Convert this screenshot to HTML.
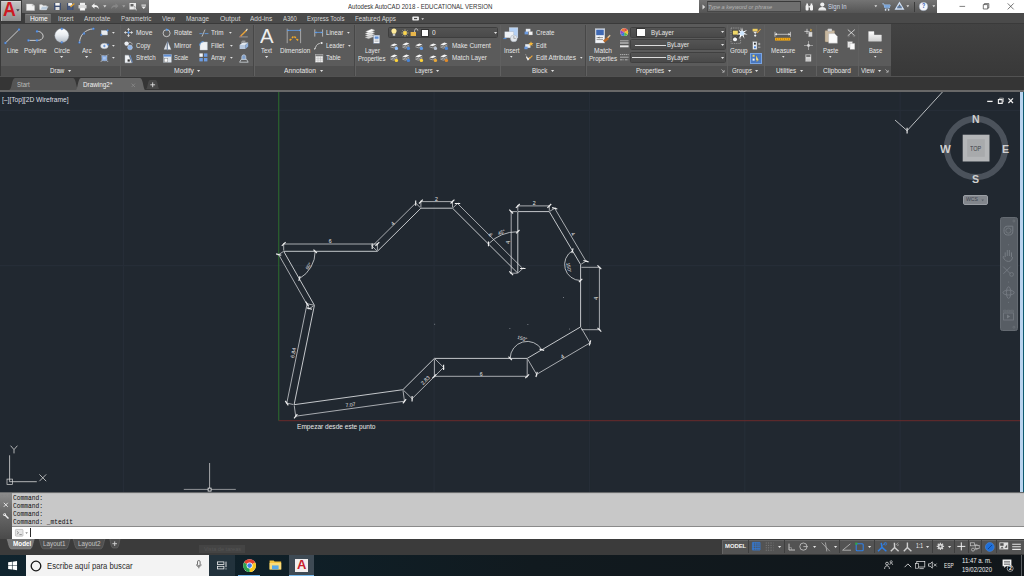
<!DOCTYPE html>
<html lang="en"><head><meta charset="utf-8"><title>Autodesk AutoCAD 2018 - EDUCATIONAL VERSION</title>
<style>
html,body{margin:0;padding:0;background:#212830;}
body{width:1024px;height:576px;overflow:hidden;position:relative;font-family:"Liberation Sans",sans-serif;}
.b{position:absolute;box-sizing:border-box;display:block;}
.t{position:absolute;white-space:pre;line-height:1;display:block;transform-origin:0 50%;}
.sec{position:absolute;left:0;overflow:hidden;width:1024px;}
svg{overflow:visible;}

#titlebar{background:#ffffff;}
#menubar{background:#4a4a4a;}
#ribbon{background:linear-gradient(#434343,#383838);}
#doctabs{background:#353535;}
#canvas{background:#212830;}
#cmd{background:#c8c8c8;}
#layoutbar{background:#3b3b3b;}
#taskbar{background:linear-gradient(90deg,#10242e 0,#0f1f27 30%,#111a1f 52%,#11161a 100%);}
#overlay{background:none;overflow:visible;}
</style></head><body>
<div class="sec" id="titlebar" style="top:0px;height:13px">
<div class="b " style="left:0.00px;top:0.00px;width:148.60px;height:13.00px;background:linear-gradient(#7e7e7e,#606060);"></div>
<svg class="b" style="left:26.30px;top:2.00px" width="9.2" height="9" viewBox="0 0 9.2 9"><path d="M.4 2h5.800l2.400 1.800v4.600H.4z" fill="#f4f4f4" stroke="#c4c4c4" stroke-width=".4"/><path d="M6.200 2v1.800h2.400" fill="#d8d8d8" stroke="#9a9a9a" stroke-width=".3"/></svg>
<svg class="b" style="left:39.00px;top:2.00px" width="10" height="9" viewBox="0 0 10 9"><path d="M.5 2.600h2.600l.9.900h3.600v4.300H.5z" fill="#ececec"/><path d="M1.300 7.800l1.700-3.200h6.200L7.400 7.800z" fill="#b9cadb" stroke="#f0f0f0" stroke-width=".3"/></svg>
<svg class="b" style="left:53.00px;top:2.00px" width="8" height="9" viewBox="0 0 8 9"><rect x="1" y="1" width="7" height="7" fill="#3f4f72"/><rect x="2.3" y="1" width="4.4" height="2.6" fill="#f4f4f4"/><rect x="2.5" y="5" width="4" height="3" fill="#e0e0e0"/></svg>
<svg class="b" style="left:65.50px;top:2.00px" width="9" height="9" viewBox="0 0 9 9"><rect x="1" y="1" width="6.500" height="7" fill="#3f4f72"/><rect x="2.200" y="1" width="4" height="2.800" fill="#f0f0f0"/><rect x="2" y="4.6" width="4.4" height="3.4" fill="#46587e"/><path d="M4 4.500l3.800-3.600 1 1L5 5.600z" fill="#e0a030"/></svg>
<svg class="b" style="left:78.00px;top:2.00px" width="9" height="9" viewBox="0 0 9 9"><rect x="2" y=".8" width="5" height="2.6" fill="#f0f0f0"/><rect x=".5" y="3" width="8" height="3.6" rx=".6" fill="#dcdcdc"/><rect x="2" y="5.4" width="5" height="3" fill="#fafafa" stroke="#bbb" stroke-width=".3"/></svg>
<svg class="b" style="left:91.40px;top:2.00px" width="8" height="9" viewBox="0 0 8 9"><path d="M.5 4l3-2.8v1.9c3 0 4.3 1.5 4.3 4.2C7 5.5 6 4.9 3.5 4.9v1.9z" fill="#f0f0f0"/></svg>
<svg class="b" style="left:102.80px;top:5.00px" width="4" height="3" viewBox="0 0 4 3"><path d="M.2.3h3.2L1.8 2.4z" fill="#d8d8d8"/></svg>
<svg class="b" style="left:110.50px;top:2.00px" width="8" height="9" viewBox="0 0 8 9"><path d="M7.5 4l-3-2.8v1.9c-3 0-4.3 1.5-4.3 4.2C1 5.5 2 4.9 4.5 4.9v1.9z" fill="#868686"/></svg>
<svg class="b" style="left:121.80px;top:5.00px" width="4" height="3" viewBox="0 0 4 3"><path d="M.2.3h3.2L1.8 2.4z" fill="#a0a0a0"/></svg>
<svg class="b" style="left:129.40px;top:2.00px" width="9" height="9" viewBox="0 0 9 9"><rect x=".5" y="1" width="6.5" height="6.5" fill="#ececec"/><rect x="1.5" y="2" width="3" height="2.5" fill="#666"/><path d="M5.5 4l2.5 4.2-1 .3-.8-1.5-1 1z" fill="#fafafa" stroke="#555" stroke-width=".3"/></svg>
<svg class="b" style="left:141.20px;top:3.60px" width="6" height="6" viewBox="0 0 6 6"><rect x=".4" y=".6" width="4.6" height="1" fill="#f0f0f0"/><path d="M.4 2.6h4.6L2.7 5z" fill="#f0f0f0"/></svg>
<span class="t" style="left:348.00px;top:3.53px;font-size:6.9px;transform:scaleX(0.8824);color:#333333;">Autodesk AutoCAD 2018 - EDUCATIONAL VERSION</span>
<div class="b " style="left:699.10px;top:0.00px;width:237.60px;height:13.00px;background:linear-gradient(#747474,#545454);"></div>
<svg class="b" style="left:701.50px;top:3.50px" width="4" height="6" viewBox="0 0 4 6"><path d="M.5.6L3.2 3 .5 5.4z" fill="#dcdcdc"/></svg>
<div class="b " style="left:706.60px;top:0.80px;width:94.80px;height:11.20px;background:#6f6f6f;border:0.6px solid #484848;border-top-color:#3a3a3a;"></div>
<span class="t" style="left:708.20px;top:3.57px;font-size:6.2px;transform:scaleX(0.9018);color:#b4b4b4;font-style:italic;">Type a keyword or phrase</span>
<svg class="b" style="left:804.50px;top:2.50px" width="9" height="8" viewBox="0 0 9 8"><rect x=".6" y="2" width="3" height="5.4" rx="1" fill="#f2f2f2"/><rect x="5" y="2" width="3" height="5.4" rx="1" fill="#f2f2f2"/><rect x="1.3" y=".5" width="1.7" height="2" fill="#f2f2f2"/><rect x="5.6" y=".5" width="1.7" height="2" fill="#f2f2f2"/><rect x="3.4" y="3" width="1.8" height="1.6" fill="#e0e0e0"/></svg>
<svg class="b" style="left:817.50px;top:2.20px" width="9" height="9" viewBox="0 0 9 9"><circle cx="4.3" cy="2.6" r="2.1" fill="#f0f0f0"/><path d="M.4 8.2c0-2.4 1.7-3.3 3.9-3.3s3.9.9 3.9 3.3z" fill="#f0f0f0"/><rect x=".4" y="7.6" width="7.8" height=".8" fill="#cfcfcf"/></svg>
<span class="t" style="left:828.40px;top:3.58px;font-size:6.6px;transform:scaleX(0.9059);color:#cfd8e4;">Sign In</span>
<svg class="b" style="left:873.50px;top:5.40px" width="4" height="3" viewBox="0 0 4 3"><path d="M.4.3h2.8L1.8 2.2z" fill="#e0e0e0"/></svg>
<svg class="b" style="left:882.00px;top:2.60px" width="9" height="8" viewBox="0 0 9 8"><path d="M.3.8h1.5l1.2 4.2h4.2l1-3H2.4" fill="none" stroke="#9cc0ea" stroke-width="1"/><rect x="2.6" y="2" width="5" height="2.6" fill="#7aa6dc"/><circle cx="3.6" cy="6.8" r=".9" fill="#dfe9f6"/><circle cx="6.6" cy="6.8" r=".9" fill="#dfe9f6"/></svg>
<svg class="b" style="left:895.00px;top:2.30px" width="9" height="8" viewBox="0 0 9 8"><path d="M4.5.8L8.3 7H.7z" fill="none" stroke="#cfe0f6" stroke-width="1.3"/><path d="M2.3 5h4.4" stroke="#5f8fd0" stroke-width="1"/></svg>
<svg class="b" style="left:906.00px;top:5.40px" width="4" height="3" viewBox="0 0 4 3"><path d="M.4.3h2.8L1.8 2.2z" fill="#e0e0e0"/></svg>
<div class="b " style="left:914.40px;top:1.50px;width:0.70px;height:10.00px;background:#3c3c3c;"></div>
<svg class="b" style="left:919.40px;top:2.00px" width="9" height="9" viewBox="0 0 9 9"><circle cx="4.5" cy="4.5" r="4.1" fill="#f4f6fa" stroke="#b9c6da" stroke-width=".5"/></svg>
<span class="t" style="left:922.30px;top:3.47px;font-size:6.4px;transform:scaleX(0.8448);color:#2b55b5;font-weight:700;">?</span>
<svg class="b" style="left:931.70px;top:5.40px" width="4" height="3" viewBox="0 0 4 3"><path d="M.4.3h2.8L1.8 2.2z" fill="#e0e0e0"/></svg>
<svg class="b" style="left:958.00px;top:1.00px" width="60" height="11" viewBox="0 0 60 11"><path d="M1.5 5.4h5.6" stroke="#4a4a4a" stroke-width=".7"/><path d="M25.3 3.6h4.4v4.4h-4.4z M26.4 3.6v-1h4.4v4.4h-1" fill="none" stroke="#3c3c3c" stroke-width=".7"/><path d="M49.7 2.4l6 6M55.7 2.4l-6 6" stroke="#3c3c3c" stroke-width=".7"/></svg>
</div>
<div class="sec" id="menubar" style="top:13px;height:10px">
<div class="b " style="left:0.00px;top:0.00px;width:25.00px;height:10.50px;background:#3c3c3c;"></div>
<div class="b " style="left:24.80px;top:1.20px;width:26.60px;height:9.60px;background:linear-gradient(#6e6e6e,#646464);border-top:0.5px solid #808080;border-radius:1px 1px 0 0;"></div>
<span class="t" style="left:29.60px;top:3.37px;font-size:6.4px;transform:scaleX(1.0432);color:#ffffff;">Home</span>
<span class="t" style="left:58.00px;top:3.37px;font-size:6.4px;transform:scaleX(0.9634);color:#d6d6d6;">Insert</span>
<span class="t" style="left:83.60px;top:3.37px;font-size:6.4px;transform:scaleX(1.0315);color:#d6d6d6;">Annotate</span>
<span class="t" style="left:120.60px;top:3.37px;font-size:6.4px;transform:scaleX(0.9836);color:#d6d6d6;">Parametric</span>
<span class="t" style="left:162.00px;top:3.37px;font-size:6.4px;transform:scaleX(0.9455);color:#d6d6d6;">View</span>
<span class="t" style="left:185.60px;top:3.37px;font-size:6.4px;transform:scaleX(0.9953);color:#d6d6d6;">Manage</span>
<span class="t" style="left:219.60px;top:3.37px;font-size:6.4px;transform:scaleX(1.0632);color:#d6d6d6;">Output</span>
<span class="t" style="left:250.20px;top:3.37px;font-size:6.4px;transform:scaleX(1.0244);color:#d6d6d6;">Add-ins</span>
<span class="t" style="left:283.20px;top:3.37px;font-size:6.4px;transform:scaleX(0.9238);color:#d6d6d6;">A360</span>
<span class="t" style="left:307.20px;top:3.37px;font-size:6.4px;transform:scaleX(0.9427);color:#d6d6d6;">Express Tools</span>
<span class="t" style="left:355.20px;top:3.37px;font-size:6.4px;transform:scaleX(0.9861);color:#d6d6d6;">Featured Apps</span>
<svg class="b" style="left:412.30px;top:2.80px" width="8" height="6" viewBox="0 0 8 6"><rect x=".3" y=".6" width="6.6" height="4" rx=".8" fill="#f0f0f0"/><rect x="2" y="1.9" width="3.2" height="1.3" fill="#4a4a4a"/></svg>
<svg class="b" style="left:421.30px;top:4.70px" width="4" height="3" viewBox="0 0 4 3"><path d="M.4.3h2.6L1.7 2z" fill="#e0e0e0"/></svg>
</div>
<div class="sec" id="ribbon" style="top:23px;height:53px">
<div class="b " style="left:0.00px;top:0.00px;width:1024.00px;height:0.60px;background:#3a3a3a;"></div>
<div class="b " style="left:0.00px;top:0.50px;width:891.00px;height:42.20px;background:#5b5b5b;"></div>
<div class="b " style="left:0.00px;top:42.70px;width:891.00px;height:10.80px;background:#4f4f4f;"></div>
<div class="b " style="left:0.00px;top:52.80px;width:1024.00px;height:0.80px;background:#383838;"></div>
<div class="b " style="left:0.00px;top:0.50px;width:0.90px;height:53.00px;background:#3a3a3a;"></div>
<div class="b " style="left:119.50px;top:1.50px;width:0.60px;height:51.00px;background:#474747;"></div>
<div class="b " style="left:120.10px;top:1.50px;width:0.50px;height:51.00px;background:#606060;"></div>
<div class="b " style="left:253.00px;top:1.50px;width:0.60px;height:51.00px;background:#474747;"></div>
<div class="b " style="left:253.60px;top:1.50px;width:0.50px;height:51.00px;background:#606060;"></div>
<div class="b " style="left:353.90px;top:1.50px;width:0.60px;height:51.00px;background:#474747;"></div>
<div class="b " style="left:354.50px;top:1.50px;width:0.50px;height:51.00px;background:#606060;"></div>
<div class="b " style="left:499.50px;top:1.50px;width:0.60px;height:51.00px;background:#474747;"></div>
<div class="b " style="left:500.10px;top:1.50px;width:0.50px;height:51.00px;background:#606060;"></div>
<div class="b " style="left:585.10px;top:1.50px;width:0.60px;height:51.00px;background:#474747;"></div>
<div class="b " style="left:585.70px;top:1.50px;width:0.50px;height:51.00px;background:#606060;"></div>
<div class="b " style="left:726.70px;top:1.50px;width:0.60px;height:51.00px;background:#474747;"></div>
<div class="b " style="left:727.30px;top:1.50px;width:0.50px;height:51.00px;background:#606060;"></div>
<div class="b " style="left:763.50px;top:1.50px;width:0.60px;height:51.00px;background:#474747;"></div>
<div class="b " style="left:764.10px;top:1.50px;width:0.50px;height:51.00px;background:#606060;"></div>
<div class="b " style="left:815.50px;top:1.50px;width:0.60px;height:51.00px;background:#474747;"></div>
<div class="b " style="left:816.10px;top:1.50px;width:0.50px;height:51.00px;background:#606060;"></div>
<div class="b " style="left:857.50px;top:1.50px;width:0.60px;height:51.00px;background:#474747;"></div>
<div class="b " style="left:858.10px;top:1.50px;width:0.50px;height:51.00px;background:#606060;"></div>
<svg class="b" style="left:3.00px;top:4.50px" width="18" height="18" viewBox="0 0 18 18"><path d="M2.4 15L16 1.6" stroke="#e8e8e8" stroke-width=".8"/><circle cx="2.4" cy="15" r="1.04" fill="#6fa4e8" stroke="#2f68c0" stroke-width=".45"/><circle cx="16" cy="1.6" r="1.04" fill="#6fa4e8" stroke="#2f68c0" stroke-width=".45"/></svg>
<span class="t" style="left:6.60px;top:24.67px;font-size:6.4px;transform:scaleX(0.9426);color:#e6e6e6;">Line</span>
<svg class="b" style="left:26.00px;top:5.00px" width="20" height="16" viewBox="0 0 20 16"><path d="M2.4 12.4H11.5C20 12.4 18 3 11 3.4" fill="none" stroke="#e8e8e8" stroke-width=".8"/><circle cx="2.4" cy="12.4" r="1.04" fill="#6fa4e8" stroke="#2f68c0" stroke-width=".45"/><circle cx="11" cy="12.4" r="1.04" fill="#6fa4e8" stroke="#2f68c0" stroke-width=".45"/><circle cx="11" cy="3.4" r="1.04" fill="#6fa4e8" stroke="#2f68c0" stroke-width=".45"/></svg>
<span class="t" style="left:24.00px;top:24.67px;font-size:6.4px;transform:scaleX(1.0094);color:#e6e6e6;">Polyline</span>
<svg class="b" style="left:54.00px;top:5.00px" width="16" height="16" viewBox="0 0 16 16"><defs><linearGradient id="cg" x1="0" y1="0" x2="0" y2="1"><stop offset="0" stop-color="#ffffff"/><stop offset=".45" stop-color="#e9edf1"/><stop offset="1" stop-color="#b4bcc6"/></linearGradient></defs><circle cx="7.8" cy="7.6" r="7" fill="url(#cg)" stroke="#9aa4b0" stroke-width=".4"/><circle cx="7.8" cy="0.8" r="0.94" fill="#6fa4e8" stroke="#2f68c0" stroke-width=".45"/><circle cx="7.8" cy="14.4" r="0.94" fill="#6fa4e8" stroke="#2f68c0" stroke-width=".45"/></svg>
<span class="t" style="left:54.00px;top:24.67px;font-size:6.4px;transform:scaleX(0.9790);color:#e6e6e6;">Circle</span>
<svg class="b" style="left:60.10px;top:32.90px" width="3.2" height="2" viewBox="0 0 3.2 2"><path d="M0 0h3.2L1.6 2z" fill="#e0e0e0"/></svg>
<svg class="b" style="left:77.00px;top:4.00px" width="19" height="18" viewBox="0 0 19 18"><path d="M2.5 15.5C3 8 8 2.6 16.4 1.8" fill="none" stroke="#e8e8e8" stroke-width=".8"/><circle cx="2.5" cy="15.5" r="1.04" fill="#6fa4e8" stroke="#2f68c0" stroke-width=".45"/><circle cx="7" cy="6.6" r="1.04" fill="#6fa4e8" stroke="#2f68c0" stroke-width=".45"/><circle cx="16.4" cy="1.8" r="1.04" fill="#6fa4e8" stroke="#2f68c0" stroke-width=".45"/></svg>
<span class="t" style="left:81.70px;top:24.67px;font-size:6.4px;transform:scaleX(1.0111);color:#e6e6e6;">Arc</span>
<svg class="b" style="left:84.70px;top:32.90px" width="3.2" height="2" viewBox="0 0 3.2 2"><path d="M0 0h3.2L1.6 2z" fill="#e0e0e0"/></svg>
<svg class="b" style="left:100.00px;top:5.60px" width="9" height="8" viewBox="0 0 9 8"><rect x="1.2" y="1.4" width="6.4" height="4.6" fill="#e9edf2" stroke="#aab4c0" stroke-width=".4"/><circle cx="1.2" cy="6" r="0.83" fill="#6fa4e8" stroke="#2f68c0" stroke-width=".45"/><circle cx="7.6" cy="1.4" r="0.83" fill="#6fa4e8" stroke="#2f68c0" stroke-width=".45"/></svg>
<svg class="b" style="left:100.00px;top:18.50px" width="9" height="8" viewBox="0 0 9 8"><ellipse cx="4.4" cy="4" rx="3.8" ry="2.7" fill="#e9edf2" stroke="#aab4c0" stroke-width=".4"/><circle cx="4.4" cy="4" r="0.83" fill="#6fa4e8" stroke="#2f68c0" stroke-width=".45"/><circle cx="8" cy="2.6" r="0.73" fill="#6fa4e8" stroke="#2f68c0" stroke-width=".45"/></svg>
<svg class="b" style="left:100.00px;top:31.00px" width="9" height="9" viewBox="0 0 9 9"><rect x="1.800" y="1.600" width="5.200" height="5.200" fill="#7fa6e0" stroke="#d4deee" stroke-width=".5" stroke-dasharray=".9 .5"/><rect x="3" y="2.800" width="2.800" height="2.800" fill="#a9c4ec"/><path d="M.6.400l1.200 1.200M8.200.400L7 1.600M.6 8L1.800 6.800M8.200 8L7 6.800" stroke="#cfd8e6" stroke-width=".6"/></svg>
<svg class="b" style="left:111.90px;top:8.80px" width="2.8" height="1.8" viewBox="0 0 2.8 1.8"><path d="M0 0h2.8L1.4 1.8z" fill="#e0e0e0"/></svg>
<svg class="b" style="left:111.90px;top:22.20px" width="2.8" height="1.8" viewBox="0 0 2.8 1.8"><path d="M0 0h2.8L1.4 1.8z" fill="#e0e0e0"/></svg>
<svg class="b" style="left:111.90px;top:34.40px" width="2.8" height="1.8" viewBox="0 0 2.8 1.8"><path d="M0 0h2.8L1.4 1.8z" fill="#e0e0e0"/></svg>
<span class="t" style="left:49.70px;top:44.57px;font-size:6.4px;transform:scaleX(0.9583);color:#e6e6e6;">Draw</span>
<svg class="b" style="left:67.90px;top:46.90px" width="3.2" height="2" viewBox="0 0 3.2 2"><path d="M0 0h3.2L1.6 2z" fill="#e0e0e0"/></svg>
<svg class="b" style="left:123.80px;top:5.30px" width="9" height="9" viewBox="0 0 9 9"><path d="M4.5 0L6 1.8H3zM4.5 9L6 7.2H3zM0 4.5L1.8 3v3zM9 4.5L7.2 3v3z" fill="#f0f0f0"/><path d="M4.5 1.5v6M1.5 4.5h6" stroke="#f0f0f0" stroke-width=".7"/><rect x="3.5" y="3.5" width="2" height="2" fill="#4f8fe0" transform="rotate(45 4.5 4.5)"/></svg>
<span class="t" style="left:135.60px;top:6.57px;font-size:6.4px;transform:scaleX(1.0486);color:#e6e6e6;">Move</span>
<svg class="b" style="left:123.80px;top:18.00px" width="10" height="10" viewBox="0 0 10 10"><circle cx="2.6" cy="2.6" r="2.2" fill="#eceff3"/><circle cx="6" cy="6.4" r="2.4" fill="#8fb3e6" stroke="#dfe8f4" stroke-width=".4"/><path d="M5 1.2c2 0 3 .8 3.2 2.4" fill="none" stroke="#e8e8e8" stroke-width=".6"/></svg>
<span class="t" style="left:135.60px;top:20.27px;font-size:6.4px;transform:scaleX(0.9650);color:#e6e6e6;">Copy</span>
<svg class="b" style="left:124.00px;top:30.50px" width="9" height="10" viewBox="0 0 9 10"><path d="M1 8.8V1.2h3.6L7.6 8.8z" fill="#f2f4f7" stroke="#bcc5d0" stroke-width=".4"/><rect x="3.6" y="5.4" width="2.2" height="2.2" fill="#333"/><path d="M6 1l2.4 7.6" stroke="#6c9be0" stroke-width=".8"/></svg>
<span class="t" style="left:135.60px;top:32.17px;font-size:6.4px;transform:scaleX(0.9679);color:#e6e6e6;">Stretch</span>
<svg class="b" style="left:162.30px;top:5.00px" width="10" height="10" viewBox="0 0 10 10"><circle cx="4.6" cy="5.2" r="3.5" fill="none" stroke="#dcdcdc" stroke-width=".8"/><path d="M3.8.4l3 .9-2.2 2z" fill="#5fa0ee"/></svg>
<span class="t" style="left:174.00px;top:6.57px;font-size:6.4px;transform:scaleX(0.9658);color:#e6e6e6;">Rotate</span>
<svg class="b" style="left:162.60px;top:17.60px" width="9" height="10" viewBox="0 0 9 10"><path d="M3.8 1.2V8.6H.8z" fill="#d8dde4"/><path d="M5 1.2V8.6H8z" fill="#f4f6f9" stroke="#aeb8c4" stroke-width=".3"/><path d="M4.4.4v9" stroke="#8fb3e6" stroke-width=".5"/></svg>
<span class="t" style="left:174.00px;top:19.97px;font-size:6.4px;transform:scaleX(1.0547);color:#e6e6e6;">Mirror</span>
<svg class="b" style="left:162.60px;top:30.60px" width="9" height="9" viewBox="0 0 9 9"><rect x=".6" y=".6" width="7.8" height="7.8" fill="#dfe4ea" stroke="#a9b3bf" stroke-width=".4"/><rect x=".6" y=".6" width="7.8" height="2" fill="#5f8fd6"/><rect x="1.4" y="4.6" width="3.4" height="3.4" fill="#fafafa" stroke="#777" stroke-width=".4"/></svg>
<span class="t" style="left:174.00px;top:32.17px;font-size:6.4px;transform:scaleX(0.8938);color:#e6e6e6;">Scale</span>
<svg class="b" style="left:199.20px;top:5.60px" width="10" height="8" viewBox="0 0 10 8"><path d="M.4 4.6h3.2M5.6 4.6h3.8" stroke="#5fa0ee" stroke-width=".8"/><path d="M3 7.6L6 .6" stroke="#dcdcdc" stroke-width=".7"/></svg>
<span class="t" style="left:211.00px;top:6.57px;font-size:6.4px;transform:scaleX(0.9883);color:#e6e6e6;">Trim</span>
<svg class="b" style="left:229.20px;top:8.80px" width="2.8" height="1.8" viewBox="0 0 2.8 1.8"><path d="M0 0h2.8L1.4 1.8z" fill="#e0e0e0"/></svg>
<svg class="b" style="left:199.40px;top:17.80px" width="9" height="10" viewBox="0 0 9 10"><path d="M1 9V4.4C1 2.4 2.4 1 4.4 1H8.4V9z" fill="#eef1f5" stroke="#b5bfcb" stroke-width=".4"/><path d="M.6 4.6C.6 2.2 2.2.6 4.6.6" fill="none" stroke="#5fa0ee" stroke-width=".9"/></svg>
<span class="t" style="left:211.00px;top:19.97px;font-size:6.4px;transform:scaleX(0.9630);color:#e6e6e6;">Fillet</span>
<svg class="b" style="left:229.60px;top:22.20px" width="2.8" height="1.8" viewBox="0 0 2.8 1.8"><path d="M0 0h2.8L1.4 1.8z" fill="#e0e0e0"/></svg>
<svg class="b" style="left:199.40px;top:30.40px" width="9" height="9" viewBox="0 0 9 9"><rect x=".4" y=".4" width="3.4" height="3.4" fill="#f2f4f7"/><rect x="5" y=".4" width="3.4" height="3.4" fill="#6c9be0"/><rect x=".4" y="5" width="3.4" height="3.4" fill="#6c9be0"/><rect x="5" y="5" width="3.4" height="3.4" fill="#6c9be0"/></svg>
<span class="t" style="left:211.00px;top:32.17px;font-size:6.4px;transform:scaleX(0.9489);color:#e6e6e6;">Array</span>
<svg class="b" style="left:229.60px;top:34.40px" width="2.8" height="1.8" viewBox="0 0 2.8 1.8"><path d="M0 0h2.8L1.4 1.8z" fill="#e0e0e0"/></svg>
<svg class="b" style="left:239.40px;top:5.00px" width="9" height="9" viewBox="0 0 9 9"><path d="M1 7.8L6.6 2.2l1 1L2 8.8z" fill="#e8a33a"/><path d="M6.4 2.4L8 .6l.8.8L7.4 3.2z" fill="#f3e6c8"/><path d="M.4 8.8l.8-1.4 1 1z" fill="#c0392b"/><path d="M.2 8.9h8.6" stroke="#d0d0d0" stroke-width=".5"/></svg>
<svg class="b" style="left:239.20px;top:18.00px" width="10" height="9" viewBox="0 0 10 9"><path d="M.6 4l3-2.4h5.6L6.4 4z" fill="#dfe6ee"/><rect x=".6" y="4" width="5.8" height="4" fill="#b9c9de"/><path d="M6.4 4l2.8-2.4v4L6.4 8z" fill="#8fb0da"/><path d="M2.2 1.4L3.6.2h2.8" stroke="#f4f4f4" stroke-width=".6" fill="none"/></svg>
<svg class="b" style="left:239.20px;top:30.60px" width="10" height="9" viewBox="0 0 10 9"><path d="M2.8 5.4V3.2C2.8 1.6 3.6.8 4.8.8S6.8 1.6 6.8 3.2v2.2" fill="#7f9fca" stroke="#dfe6ee" stroke-width=".6"/><path d="M.6 8.2l1.6-2.8h5.4l1.6 2.8z" fill="none" stroke="#dfe6ee" stroke-width=".7"/></svg>
<span class="t" style="left:173.60px;top:44.57px;font-size:6.4px;transform:scaleX(1.0622);color:#e6e6e6;">Modify</span>
<svg class="b" style="left:197.40px;top:46.90px" width="3.2" height="2" viewBox="0 0 3.2 2"><path d="M0 0h3.2L1.6 2z" fill="#e0e0e0"/></svg>
<span class="t" style="left:260.00px;top:3.53px;font-size:19.6px;transform:scaleX(1.0399);color:#eeeeee;">A</span>
<span class="t" style="left:261.00px;top:24.67px;font-size:6.4px;transform:scaleX(0.9374);color:#e6e6e6;">Text</span>
<svg class="b" style="left:264.80px;top:32.90px" width="3.2" height="2" viewBox="0 0 3.2 2"><path d="M0 0h3.2L1.6 2z" fill="#e0e0e0"/></svg>
<svg class="b" style="left:286.00px;top:4.60px" width="16" height="16" viewBox="0 0 16 16"><path d="M1.2.6v14.6M14.6.6v14.6" stroke="#dcdcdc" stroke-width=".6"/><path d="M1.2 2.4h13.4" stroke="#5fa0ee" stroke-width=".8"/><path d="M1.2 2.4l1.6-.9v1.8zM14.6 2.4l-1.6-.9v1.8z" fill="#5fa0ee"/><path d="M3.6 12.4l1.8-1.4M6 10l1.4-1.6M8.4 8.4L9.8 10M10.4 11l1.8 1.4" stroke="#f0a828" stroke-width="1.5"/></svg>
<span class="t" style="left:279.70px;top:24.67px;font-size:6.4px;transform:scaleX(1.0032);color:#e6e6e6;">Dimension</span>
<svg class="b" style="left:314.00px;top:5.60px" width="10" height="8" viewBox="0 0 10 8"><path d="M.8.4v7.2M8.6.4v7.2" stroke="#dcdcdc" stroke-width=".7"/><path d="M.8 3.4h7.8" stroke="#5fa0ee" stroke-width=".8"/><path d="M.8 3.4l1.8-1v2zM8.6 3.4l-1.8-1v2z" fill="#5fa0ee"/></svg>
<span class="t" style="left:325.50px;top:6.57px;font-size:6.4px;transform:scaleX(0.9682);color:#e6e6e6;">Linear</span>
<svg class="b" style="left:346.60px;top:8.80px" width="2.8" height="1.8" viewBox="0 0 2.8 1.8"><path d="M0 0h2.8L1.4 1.8z" fill="#e0e0e0"/></svg>
<svg class="b" style="left:314.00px;top:18.00px" width="10" height="9" viewBox="0 0 10 9"><path d="M.8 8.2C2 5.4 2.4 3 5.8 2.4" fill="none" stroke="#dcdcdc" stroke-width=".8"/><circle cx="7.6" cy="2" r="1.1" fill="#f0f0f0"/><path d="M.2 8.8l.2-2 1.4 1z" fill="#dcdcdc"/></svg>
<span class="t" style="left:325.50px;top:19.97px;font-size:6.4px;transform:scaleX(0.9294);color:#e6e6e6;">Leader</span>
<svg class="b" style="left:348.20px;top:22.20px" width="2.8" height="1.8" viewBox="0 0 2.8 1.8"><path d="M0 0h2.8L1.4 1.8z" fill="#e0e0e0"/></svg>
<svg class="b" style="left:314.60px;top:30.60px" width="9" height="9" viewBox="0 0 9 9"><rect x=".5" y=".5" width="7.4" height="7.6" fill="#f4f4f4" stroke="#cfcfcf" stroke-width=".4"/><rect x=".5" y=".5" width="7.4" height="1.8" fill="#7a7a7a"/><path d="M3 2.3v5.8M5.4 2.3v5.8M.5 4.3h7.4M.5 6.2h7.4" stroke="#9a9a9a" stroke-width=".4"/></svg>
<span class="t" style="left:325.50px;top:32.17px;font-size:6.4px;transform:scaleX(0.9620);color:#e6e6e6;">Table</span>
<span class="t" style="left:284.40px;top:44.57px;font-size:6.4px;transform:scaleX(1.0470);color:#e6e6e6;">Annotation</span>
<svg class="b" style="left:319.90px;top:46.90px" width="3.2" height="2" viewBox="0 0 3.2 2"><path d="M0 0h3.2L1.6 2z" fill="#e0e0e0"/></svg>
<svg class="b" style="left:363.50px;top:4.60px" width="17" height="16" viewBox="0 0 17 16"><path d="M1 5.6L7.2 3l3.6 1.2-6.2 2.6z" fill="#fafafa" stroke="#9a9a9a" stroke-width=".3"/><path d="M1 7.6l6.2-2.6 3.6 1.2-6.2 2.6z" fill="#e6e6e6" stroke="#9a9a9a" stroke-width=".3"/><path d="M1 9.6L7.2 7l3.6 1.2-6.2 2.6z" fill="#d6d6d6" stroke="#9a9a9a" stroke-width=".3"/><path d="M1.6 3.6L7.6 1l3.4 1.2-6 2.6z" fill="#ffffff" stroke="#9a9a9a" stroke-width=".3"/><rect x="9.6" y="7.2" width="6" height="8" fill="#f4f6f9" stroke="#8aa0c0" stroke-width=".4"/><rect x="10.6" y="8.4" width="4" height="2.4" fill="#5f8fd6"/><path d="M10.6 12h4M10.6 13.4h4" stroke="#8a8a8a" stroke-width=".5"/></svg>
<span class="t" style="left:364.50px;top:24.87px;font-size:6.4px;transform:scaleX(0.9312);color:#e6e6e6;">Layer</span>
<span class="t" style="left:357.50px;top:32.77px;font-size:6.4px;transform:scaleX(0.9437);color:#e6e6e6;">Properties</span>
<div class="b " style="left:387.80px;top:3.90px;width:110.60px;height:11.40px;background:linear-gradient(#535353,#4a4a4a);border:0.5px solid #3e3e3e;border-radius:1.5px;"></div>
<svg class="b" style="left:391.40px;top:5.40px" width="6" height="9" viewBox="0 0 6 9"><path d="M3 .4C1.4.4.4 1.6.4 3c0 1.2.9 1.8 1.2 2.8h2.8C4.700 4.800 5.600 4.200 5.600 3 5.600 1.600 4.600.4 3 .4z" fill="#ffeb9a"/><rect x="1.800" y="6" width="2.400" height="1.800" fill="#c9c9c9"/></svg>
<svg class="b" style="left:401.00px;top:5.60px" width="8" height="8" viewBox="0 0 8 8"><path d="M4 .3v7.400M.3 4h7.400M1.400 1.400l5.200 5.200M6.600 1.400L1.400 6.600" stroke="#f6e9a8" stroke-width=".5"/><circle cx="4" cy="4" r="1.900" fill="#ffd84a"/></svg>
<svg class="b" style="left:410.40px;top:5.40px" width="8" height="9" viewBox="0 0 8 9"><path d="M4.600 4V2.600C4.600 1.400 5.300.8 6.200.8S7.800 1.400 7.800 2.600" fill="none" stroke="#d8d8d8" stroke-width=".8"/><rect x=".6" y="4" width="5.400" height="4" fill="#e9b64a"/></svg>
<div class="b " style="left:421.00px;top:6.00px;width:8.00px;height:8.00px;background:#343434;"></div>
<div class="b " style="left:421.60px;top:6.60px;width:6.80px;height:6.80px;background:#ffffff;"></div>
<span class="t" style="left:431.50px;top:6.77px;font-size:6.4px;transform:scaleX(1.0386);color:#e6e6e6;">0</span>
<svg class="b" style="left:493.60px;top:8.80px" width="3.2" height="2" viewBox="0 0 3.2 2"><path d="M0 0h3.2L1.6 2z" fill="#e0e0e0"/></svg>
<svg class="b" style="left:389.90px;top:18.60px" width="9" height="9" viewBox="0 0 9 9"><path d="M.4 3.200L4.400 1.400l3 1-4 1.800z" fill="#f4f4f4"/><path d="M.4 4.800l3 1 4-1.800" fill="none" stroke="#d0d0d0" stroke-width=".6"/><circle cx="6.400" cy="6.400" r="1.700" fill="#8fc0ff"/></svg>
<svg class="b" style="left:402.00px;top:18.60px" width="9" height="9" viewBox="0 0 9 9"><path d="M.4 2.400L4.400.6l3 1-4 1.800z" fill="#f4f4f4"/><path d="M.4 3.800l3 1 4-1.800M.4 5.200l3 1 4-1.800" fill="none" stroke="#d0d0d0" stroke-width=".6"/><circle cx="6.400" cy="6.400" r="1.700" fill="#4a86d8"/></svg>
<svg class="b" style="left:415.30px;top:18.60px" width="9" height="9" viewBox="0 0 9 9"><path d="M.4 3.200L4.400 1.400l3 1-4 1.800z" fill="#f4f4f4"/><path d="M.4 4.800l3 1 4-1.800" fill="none" stroke="#d0d0d0" stroke-width=".6"/><circle cx="6.400" cy="6.400" r="1.700" fill="#5f9cea"/></svg>
<svg class="b" style="left:428.50px;top:18.60px" width="9" height="9" viewBox="0 0 9 9"><path d="M.4 3.200L4.400 1.400l3 1-4 1.800z" fill="#f4f4f4"/><path d="M.4 4.800l3 1 4-1.800" fill="none" stroke="#d0d0d0" stroke-width=".6"/><circle cx="6.400" cy="6.400" r="1.700" fill="#b8c4d4"/></svg>
<svg class="b" style="left:440.30px;top:18.60px" width="9" height="9" viewBox="0 0 9 9"><path d="M.4 2.400L4.400.6l3 1-4 1.800z" fill="#f4f4f4"/><path d="M.4 3.800l3 1 4-1.800M.4 5.200l3 1 4-1.800" fill="none" stroke="#d0d0d0" stroke-width=".6"/><circle cx="6.400" cy="6.400" r="1.700" fill="#4a86d8"/></svg>
<span class="t" style="left:452.20px;top:19.97px;font-size:6.4px;transform:scaleX(1.0021);color:#e6e6e6;">Make Current</span>
<svg class="b" style="left:389.90px;top:30.80px" width="9" height="9" viewBox="0 0 9 9"><path d="M.4 2.400L4.400.6l3 1-4 1.800z" fill="#f4f4f4"/><path d="M.4 3.800l3 1 4-1.800M.4 5.200l3 1 4-1.800" fill="none" stroke="#d0d0d0" stroke-width=".6"/><circle cx="6.400" cy="6.400" r="1.700" fill="#ffd43a"/></svg>
<svg class="b" style="left:402.00px;top:30.80px" width="9" height="9" viewBox="0 0 9 9"><path d="M.4 2.400L4.400.6l3 1-4 1.800z" fill="#f4f4f4"/><path d="M.4 3.800l3 1 4-1.800M.4 5.200l3 1 4-1.800" fill="none" stroke="#d0d0d0" stroke-width=".6"/><circle cx="6.400" cy="6.400" r="1.700" fill="#4a86d8"/></svg>
<svg class="b" style="left:415.30px;top:30.80px" width="9" height="9" viewBox="0 0 9 9"><path d="M.4 2.400L4.400.6l3 1-4 1.800z" fill="#f4f4f4"/><path d="M.4 3.800l3 1 4-1.800M.4 5.200l3 1 4-1.800" fill="none" stroke="#d0d0d0" stroke-width=".6"/><circle cx="6.400" cy="6.400" r="1.700" fill="#ffd43a"/></svg>
<svg class="b" style="left:428.50px;top:30.80px" width="9" height="9" viewBox="0 0 9 9"><path d="M.4 3.200L4.400 1.400l3 1-4 1.800z" fill="#f4f4f4"/><path d="M.4 4.800l3 1 4-1.800" fill="none" stroke="#d0d0d0" stroke-width=".6"/><circle cx="6.400" cy="6.400" r="1.700" fill="#e9a93a"/></svg>
<svg class="b" style="left:440.30px;top:30.80px" width="9" height="9" viewBox="0 0 9 9"><path d="M.4 2.400L4.400.6l3 1-4 1.800z" fill="#f4f4f4"/><path d="M.4 3.800l3 1 4-1.800M.4 5.200l3 1 4-1.800" fill="none" stroke="#d0d0d0" stroke-width=".6"/><circle cx="6.400" cy="6.400" r="1.700" fill="#e08a2a"/></svg>
<span class="t" style="left:452.20px;top:32.17px;font-size:6.4px;transform:scaleX(0.9894);color:#e6e6e6;">Match Layer</span>
<span class="t" style="left:414.70px;top:44.57px;font-size:6.4px;transform:scaleX(0.9173);color:#e6e6e6;">Layers</span>
<svg class="b" style="left:436.20px;top:46.90px" width="3.2" height="2" viewBox="0 0 3.2 2"><path d="M0 0h3.2L1.6 2z" fill="#e0e0e0"/></svg>
<svg class="b" style="left:503.00px;top:4.20px" width="17" height="16" viewBox="0 0 17 16"><rect x="6.400" y=".8" width="8.400" height="10" fill="#b4d0f4" stroke="#dfe9f6" stroke-width=".5"/><rect x="1.800" y="4.800" width="9" height="6" fill="#eef1f5" stroke="#aab4c0" stroke-width=".4"/><circle cx="10.800" cy="11.400" r="3.400" fill="#e2e6eb" stroke="#9aa4b0" stroke-width=".4"/><path d="M10.800 9v2.400h2" stroke="#777" stroke-width=".5" fill="none"/><path d="M.4 11.600h3" stroke="#4f8fe0" stroke-width="1"/></svg>
<span class="t" style="left:503.80px;top:24.97px;font-size:6.4px;transform:scaleX(0.9760);color:#e6e6e6;">Insert</span>
<svg class="b" style="left:510.30px;top:32.75px" width="2.6" height="1.7" viewBox="0 0 2.6 1.7"><path d="M0 0h2.6L1.3 1.7z" fill="#e0e0e0"/></svg>
<svg class="b" style="left:524.00px;top:5.40px" width="9" height="8" viewBox="0 0 9 8"><rect x="1.800" y=".8" width="4.600" height="3.200" fill="#e8ecf1"/><rect x=".6" y="3.600" width="3.600" height="2.800" fill="#6c9be0"/><rect x="4.800" y="3.600" width="3.800" height="3.400" fill="#f4f4f4" stroke="#9a9a9a" stroke-width=".3"/></svg>
<span class="t" style="left:535.60px;top:6.57px;font-size:6.4px;transform:scaleX(0.9590);color:#e6e6e6;">Create</span>
<svg class="b" style="left:524.00px;top:17.80px" width="10" height="9" viewBox="0 0 10 9"><rect x="1.200" y="3.200" width="5.200" height="3.600" fill="#e8ecf1"/><rect x=".4" y="5.600" width="3.200" height="2.600" fill="#6c9be0"/><path d="M7 .2l.7 1.700 1.800.1-1.400 1.200.5 1.800L7 4l-1.600 1 .5-1.800L4.500 2l1.800-.1z" fill="#f4b73a"/></svg>
<span class="t" style="left:535.60px;top:19.97px;font-size:6.4px;transform:scaleX(0.9441);color:#e6e6e6;">Edit</span>
<svg class="b" style="left:525.40px;top:31.20px" width="9" height="8" viewBox="0 0 9 8"><path d="M1.400 2.600l1.600 3 1.600-2" fill="none" stroke="#f4f4f4" stroke-width="1.200"/><path d="M3.600 4.600l3.400-3.400.8.800-3.400 3.400z" fill="#e8a33a"/><path d="M.2.600l1.200.500" stroke="#ddd" stroke-width=".5"/></svg>
<span class="t" style="left:535.60px;top:32.17px;font-size:6.4px;transform:scaleX(1.0117);color:#e6e6e6;">Edit Attributes</span>
<svg class="b" style="left:579.70px;top:34.45px" width="2.6" height="1.7" viewBox="0 0 2.6 1.7"><path d="M0 0h2.6L1.3 1.7z" fill="#e0e0e0"/></svg>
<span class="t" style="left:531.70px;top:44.57px;font-size:6.4px;transform:scaleX(0.9782);color:#e6e6e6;">Block</span>
<svg class="b" style="left:550.70px;top:46.90px" width="3.2" height="2" viewBox="0 0 3.2 2"><path d="M0 0h3.2L1.6 2z" fill="#e0e0e0"/></svg>
<svg class="b" style="left:594.00px;top:4.60px" width="17" height="17" viewBox="0 0 17 17"><rect x="1.200" y=".6" width="9.600" height="14.400" fill="#f4f6f9" stroke="#aab4c0" stroke-width=".4"/><rect x="2.200" y="1.600" width="7.600" height="5.600" fill="#3f69b4"/><path d="M2.600 9.600h6.400M2.600 11.600h6.400" stroke="#555" stroke-width=".6"/><path d="M4 9.600l1.400-1v2z" fill="#555"/><path d="M9 12.400l4.400-3.400 1.600 2-4.400 3.400z" fill="#b86a2a"/><path d="M13.200 9.200L15.800 6.800l.8.900-2.400 2.500z" fill="#e8c89a"/></svg>
<span class="t" style="left:594.20px;top:24.87px;font-size:6.4px;transform:scaleX(1.0341);color:#e6e6e6;">Match</span>
<span class="t" style="left:588.80px;top:32.77px;font-size:6.4px;transform:scaleX(0.9643);color:#e6e6e6;">Properties</span>
<svg class="b" style="left:620.40px;top:4.80px" width="9" height="9" viewBox="0 0 9 9"><circle cx="4.200" cy="4.200" r="3.900" fill="#e8e8e8"/><path d="M4.200 4.200V.3A3.900 3.900 0 0 1 7.600 2.250z" fill="#e84a3a"/><path d="M4.200 4.200L7.600 2.250A3.900 3.900 0 0 1 7.600 6.150z" fill="#f2c230"/><path d="M4.200 4.200L7.600 6.150A3.900 3.900 0 0 1 4.200 8.100z" fill="#58b848"/><path d="M4.200 4.200V8.100A3.900 3.900 0 0 1 .8 6.150z" fill="#3a78d8"/><path d="M4.200 4.200L.8 6.150A3.900 3.900 0 0 1 .8 2.250z" fill="#8a4ac8"/><path d="M4.200 4.200L.8 2.250A3.900 3.900 0 0 1 4.200.3z" fill="#e8783a"/></svg>
<svg class="b" style="left:620.40px;top:17.30px" width="9" height="9" viewBox="0 0 9 9"><path d="M0 .8h8.600" stroke="#e6e6e6" stroke-width=".6"/><path d="M0 3h8.600" stroke="#e6e6e6" stroke-width="1"/><path d="M0 6.300h8.600" stroke="#e6e6e6" stroke-width="2"/></svg>
<svg class="b" style="left:620.40px;top:31.30px" width="9" height="8" viewBox="0 0 9 8"><path d="M0 .6h8.600" stroke="#d6d6d6" stroke-width=".7" stroke-dasharray="1.400 .6"/><path d="M0 3.200h8.600" stroke="#d6d6d6" stroke-width=".7"/><path d="M0 5.800h8.600" stroke="#d6d6d6" stroke-width=".7" stroke-dasharray="2.600 .8 .8 .8"/></svg>
<div class="b " style="left:630.40px;top:3.70px;width:95.40px;height:11.20px;background:linear-gradient(#545454,#494949);border:0.5px solid #404040;border-radius:1.5px;"></div>
<svg class="b" style="left:720.90px;top:8.20px" width="3.2" height="2" viewBox="0 0 3.2 2"><path d="M0 0h3.2L1.6 2z" fill="#e0e0e0"/></svg>
<div class="b " style="left:630.40px;top:16.30px;width:95.40px;height:11.20px;background:linear-gradient(#545454,#494949);border:0.5px solid #404040;border-radius:1.5px;"></div>
<svg class="b" style="left:720.90px;top:20.80px" width="3.2" height="2" viewBox="0 0 3.2 2"><path d="M0 0h3.2L1.6 2z" fill="#e0e0e0"/></svg>
<div class="b " style="left:630.40px;top:29.00px;width:95.40px;height:11.20px;background:linear-gradient(#545454,#494949);border:0.5px solid #404040;border-radius:1.5px;"></div>
<svg class="b" style="left:720.90px;top:33.50px" width="3.2" height="2" viewBox="0 0 3.2 2"><path d="M0 0h3.2L1.6 2z" fill="#e0e0e0"/></svg>
<div class="b " style="left:636.40px;top:5.20px;width:9.00px;height:8.80px;background:#343434;"></div>
<div class="b " style="left:637.00px;top:5.80px;width:7.80px;height:7.60px;background:#ffffff;"></div>
<span class="t" style="left:650.60px;top:6.67px;font-size:6.4px;transform:scaleX(0.9679);color:#e6e6e6;">ByLayer</span>
<div class="b " style="left:634.70px;top:21.70px;width:31.50px;height:0.70px;background:#dcdcdc;"></div>
<span class="t" style="left:667.00px;top:19.07px;font-size:6.4px;transform:scaleX(0.9380);color:#e6e6e6;">ByLayer</span>
<div class="b " style="left:632.40px;top:34.40px;width:33.80px;height:0.70px;background:#dcdcdc;"></div>
<span class="t" style="left:667.00px;top:31.67px;font-size:6.4px;transform:scaleX(0.9380);color:#e6e6e6;">ByLayer</span>
<span class="t" style="left:635.80px;top:44.57px;font-size:6.4px;transform:scaleX(0.9677);color:#e6e6e6;">Properties</span>
<svg class="b" style="left:667.80px;top:46.90px" width="3.2" height="2" viewBox="0 0 3.2 2"><path d="M0 0h3.2L1.6 2z" fill="#e0e0e0"/></svg>
<svg class="b" style="left:720.80px;top:46.40px" width="4" height="4" viewBox="0 0 4 4"><path d="M.4.4l2.600 2.600M3.200 1v2.200H1" fill="none" stroke="#cfcfcf" stroke-width=".6"/></svg>
<svg class="b" style="left:729.60px;top:3.80px" width="18" height="18" viewBox="0 0 18 18"><rect x="1" y="1" width="9.600" height="15.400" fill="none" stroke="#d0d0d0" stroke-width=".5" stroke-dasharray="1 .8"/><rect x="2.400" y="3.200" width="5.800" height="4.800" fill="#f0d868" stroke="#3a3a3a" stroke-width=".7"/><circle cx="5" cy="12.400" r="2.500" fill="#f4f6f9" stroke="#2a2a2a" stroke-width=".8"/><path d="M7 10.600l4.200-4.200" stroke="#2a2a2a" stroke-width="1"/><path d="M12 .2l.9 4.300L17.200 3l-3.300 2.800 3.800 1.600-4.200.2 1 4.200-2.400-3.600L9.200 12l.9-4.200-3.300-.6 3.600-1.400L8.200 2.600l3 2z" fill="#ffffff"/><circle cx="12" cy="6.200" r="2.200" fill="#cfe8ff"/></svg>
<span class="t" style="left:730.30px;top:24.87px;font-size:6.4px;transform:scaleX(0.9850);color:#e6e6e6;">Group</span>
<svg class="b" style="left:752.00px;top:5.00px" width="9" height="9" viewBox="0 0 9 9"><rect x=".6" y=".8" width="5" height="2.600" fill="#f0d060"/><path d="M1.200 3.800h4L3.200 6z" fill="#e8e8e8"/><circle cx="3.200" cy="7.600" r="1.100" fill="#eef1f5"/><path d="M4.800 4.600L8.400.8l.5.600L5.400 5.200z" fill="#e8a33a"/></svg>
<svg class="b" style="left:752.00px;top:18.00px" width="9" height="9" viewBox="0 0 9 9"><rect x=".8" y=".6" width="4.200" height="7.800" fill="#e8ecf1" stroke="#8a8a8a" stroke-width=".4"/><rect x="2" y="1.800" width="1.800" height="1.800" fill="#333"/><rect x="2" y="5.400" width="1.800" height="1.800" fill="#3a78d8"/><path d="M6 3h2.400M7.200 1.800v2.400M6 6.200h2.400" stroke="#e0e0e0" stroke-width=".6"/></svg>
<div class="b " style="left:749.80px;top:30.00px;width:12.60px;height:10.50px;background:#4a78c0;border:0.5px solid #7aa4e0;"></div>
<svg class="b" style="left:752.40px;top:31.20px" width="8" height="8" viewBox="0 0 8 8"><rect x=".6" y=".8" width="2" height="2" fill="#f0d060"/><rect x=".6" y="4.600" width="2" height="2" fill="#f4f4f4"/><path d="M4 1l3 5.600-1.300-.2-.5 1.400-.9-.3.500-1.400L4 6.800z" fill="#f6e08a" stroke="#333" stroke-width=".2"/></svg>
<span class="t" style="left:731.90px;top:44.57px;font-size:6.4px;transform:scaleX(0.9538);color:#e6e6e6;">Groups</span>
<svg class="b" style="left:755.40px;top:46.90px" width="3.2" height="2" viewBox="0 0 3.2 2"><path d="M0 0h3.2L1.6 2z" fill="#e0e0e0"/></svg>
<svg class="b" style="left:774.40px;top:8.40px" width="18" height="11" viewBox="0 0 18 11"><path d="M1 .8v5M16.400 .8v5" stroke="#e8e8e8" stroke-width=".7"/><path d="M1 3.300h15.400" stroke="#e8e8e8" stroke-width=".7"/><path d="M1 3.300l2-1.200v2.400zM16.400 3.300l-2-1.200v2.400z" fill="#e8e8e8"/><rect x="1" y="6.800" width="15.400" height="2.800" fill="#f0a818"/><path d="M2.500 7.400v1.600M4.500 7.400v1M6.500 7.400v1.600M8.500 7.400v1M10.500 7.400v1.600M12.500 7.400v1M14.500 7.400v1.600" stroke="#7a5208" stroke-width=".4"/></svg>
<span class="t" style="left:771.00px;top:24.87px;font-size:6.4px;transform:scaleX(0.9769);color:#e6e6e6;">Measure</span>
<svg class="b" style="left:781.70px;top:32.95px" width="2.6" height="1.7" viewBox="0 0 2.6 1.7"><path d="M0 0h2.6L1.3 1.7z" fill="#e0e0e0"/></svg>
<svg class="b" style="left:803.60px;top:5.00px" width="9" height="10" viewBox="0 0 9 10"><path d="M.4 3.400h5.200M3 .8v5.200" stroke="#e8e8e8" stroke-width=".7"/><rect x="4.600" y="4" width="3.600" height="4.800" fill="#d8d8d8" stroke="#8a8a8a" stroke-width=".3"/><path d="M6.400.2l.5 1.200 1.300.1-1 .9.300 1.300-1.100-.7" fill="#f4b73a"/></svg>
<svg class="b" style="left:803.60px;top:17.60px" width="9" height="9" viewBox="0 0 9 9"><path d="M4.500 0v9M0 4.500h9" stroke="#b8b8b8" stroke-width=".7"/><circle cx="4.500" cy="4.500" r="1.400" fill="#d8d8d8"/></svg>
<svg class="b" style="left:804.60px;top:31.00px" width="7" height="8" viewBox="0 0 7 8"><rect x=".5" y=".5" width="5.600" height="7" fill="#e8e8e8" stroke="#8a8a8a" stroke-width=".3"/><rect x="1.200" y="1.200" width="4.200" height="1.600" fill="#555"/><path d="M1.200 4h4.200M1.200 5.400h4.200M1.200 6.600h4.200" stroke="#8a8a8a" stroke-width=".4"/></svg>
<span class="t" style="left:775.80px;top:44.57px;font-size:6.4px;transform:scaleX(0.9801);color:#e6e6e6;">Utilities</span>
<svg class="b" style="left:799.90px;top:46.90px" width="3.2" height="2" viewBox="0 0 3.2 2"><path d="M0 0h3.2L1.6 2z" fill="#e0e0e0"/></svg>
<svg class="b" style="left:823.60px;top:4.60px" width="15" height="16" viewBox="0 0 15 16"><rect x="1" y="2.400" width="9.600" height="11.600" rx=".8" fill="#c8b8a0" stroke="#8a7a60" stroke-width=".4"/><rect x="3.600" y=".8" width="4.400" height="2.600" rx=".6" fill="#d8d8d8" stroke="#8a8a8a" stroke-width=".3"/><path d="M4.600 5.600h6l2.800 2.800v6.800H4.600z" fill="#fafafa" stroke="#a8a8a8" stroke-width=".4"/></svg>
<span class="t" style="left:823.00px;top:24.87px;font-size:6.4px;transform:scaleX(0.9361);color:#e6e6e6;">Paste</span>
<svg class="b" style="left:829.30px;top:32.95px" width="2.6" height="1.7" viewBox="0 0 2.6 1.7"><path d="M0 0h2.6L1.3 1.7z" fill="#e0e0e0"/></svg>
<svg class="b" style="left:846.60px;top:5.60px" width="9" height="8" viewBox="0 0 9 8"><path d="M.8.6l6.800 6M7.800.6L1 6.600" stroke="#e8e8e8" stroke-width=".8"/><circle cx="1.600" cy="6.800" r="1" fill="none" stroke="#8a8a8a" stroke-width=".5"/><circle cx="7" cy="6.800" r="1" fill="none" stroke="#8a8a8a" stroke-width=".5"/></svg>
<svg class="b" style="left:846.60px;top:18.00px" width="9" height="9" viewBox="0 0 9 9"><rect x=".6" y=".6" width="4.800" height="6" fill="#e8e8e8" stroke="#9a9a9a" stroke-width=".3"/><rect x="3" y="2.400" width="4.800" height="6" fill="#fafafa" stroke="#9a9a9a" stroke-width=".3"/></svg>
<span class="t" style="left:823.40px;top:44.57px;font-size:6.4px;transform:scaleX(1.0198);color:#e6e6e6;">Clipboard</span>
<svg class="b" style="left:868.40px;top:7.60px" width="15" height="11" viewBox="0 0 15 11"><defs><linearGradient id="bg1" x1="0" y1="0" x2="0" y2="1"><stop offset="0" stop-color="#ffffff"/><stop offset="1" stop-color="#cfcfcf"/></linearGradient></defs><path d="M.6.600h5.400v3.400h7.400v6.200H.6z" fill="url(#bg1)" stroke="#e0e0e0" stroke-width=".4"/></svg>
<span class="t" style="left:868.80px;top:24.87px;font-size:6.4px;transform:scaleX(0.9055);color:#e6e6e6;">Base</span>
<svg class="b" style="left:874.10px;top:32.95px" width="2.6" height="1.7" viewBox="0 0 2.6 1.7"><path d="M0 0h2.6L1.3 1.7z" fill="#e0e0e0"/></svg>
<span class="t" style="left:861.30px;top:44.57px;font-size:6.4px;transform:scaleX(0.9745);color:#e6e6e6;">View</span>
<svg class="b" style="left:878.10px;top:46.90px" width="3.2" height="2" viewBox="0 0 3.2 2"><path d="M0 0h3.2L1.6 2z" fill="#e0e0e0"/></svg>
<svg class="b" style="left:885.40px;top:46.40px" width="4" height="4" viewBox="0 0 4 4"><path d="M.4.4l2.600 2.600M3.200 1v2.200H1" fill="none" stroke="#cfcfcf" stroke-width=".6"/></svg>
</div>
<div class="sec" id="doctabs" style="top:76px;height:16px">
<div class="b " style="left:0.00px;top:0.00px;width:1024.00px;height:0.70px;background:#525252;"></div>
<svg class="b" style="left:9.00px;top:2.40px" width="70" height="12.099999999999994" viewBox="0 0 70 12.099999999999994"><path d="M0 12.099999999999994C3.0 12.099999999999994 2.5 0 6 0H64C67.5 0 67.0 12.099999999999994 70 12.099999999999994z" fill="#555555"/></svg>
<svg class="b" style="left:75.00px;top:1.80px" width="71" height="12.700000000000003" viewBox="0 0 71 12.700000000000003"><path d="M0 12.700000000000003C3.0 12.700000000000003 2.5 0 6 0H65C68.5 0 68.0 12.700000000000003 71 12.700000000000003z" fill="#676767"/></svg>
<svg class="b" style="left:145.50px;top:4.20px" width="13.5" height="9.0" viewBox="0 0 13.5 9.0"><path d="M0 9.0C1.7999999999999998 9.0 1.5 0 4 0H9.5C12.0 0 11.7 9.0 13.5 9.0z" fill="#474747"/></svg>
<span class="t" style="left:16.90px;top:5.77px;font-size:6.4px;transform:scaleX(0.9481);color:#bdbdbd;">Start</span>
<span class="t" style="left:82.80px;top:5.67px;font-size:6.4px;transform:scaleX(0.9971);color:#f0f0f0;">Drawing2*</span>
<svg class="b" style="left:131.40px;top:6.60px" width="5" height="5" viewBox="0 0 5 5"><path d="M.6.6l3.400 3.400M4 .6L.6 4" stroke="#8a8a8a" stroke-width=".8"/></svg>
<svg class="b" style="left:149.60px;top:6.20px" width="6" height="6" viewBox="0 0 6 6"><path d="M2.700 .4v4.800M.3 2.800h4.800" stroke="#e0e0e0" stroke-width=".9"/></svg>
<div class="b " style="left:0.00px;top:14.20px;width:1024.00px;height:1.40px;background:#686868;"></div>
</div>
<div class="sec" id="canvas" style="top:92px;height:400px">
<svg class="b" style="left:0.00px;top:0.00px" width="1024" height="400" viewBox="0 0 1024 400"><line x1="123.40" y1="0.00" x2="123.40" y2="400.00" stroke="#262d37" stroke-width="1.2" /><line x1="434.10" y1="0.00" x2="434.10" y2="400.00" stroke="#262d37" stroke-width="1.2" /><line x1="589.45" y1="0.00" x2="589.45" y2="400.00" stroke="#262d37" stroke-width="1.2" /><line x1="744.80" y1="0.00" x2="744.80" y2="400.00" stroke="#262d37" stroke-width="1.2" /><line x1="900.15" y1="0.00" x2="900.15" y2="400.00" stroke="#262d37" stroke-width="1.2" /><line x1="0.00" y1="18.35" x2="1020.00" y2="18.35" stroke="#262d37" stroke-width="1.2" /><line x1="0.00" y1="173.60" x2="1020.00" y2="173.60" stroke="#262d37" stroke-width="1.2" /><line x1="278.75" y1="0.00" x2="278.75" y2="328.70" stroke="#2c6e2c" stroke-width="1.0" /><line x1="278.75" y1="328.70" x2="1020.00" y2="328.70" stroke="#6b2b2b" stroke-width="1.0" /><polygon points="283.70,159.30 377.40,159.30 420.90,116.20 452.50,116.20 517.80,181.20 517.80,119.60 549.30,119.60 580.60,172.50 580.60,234.90 527.20,266.40 434.40,266.40 402.90,297.70 294.10,312.70 314.40,213.30" fill="none" stroke="#e2e4e6" stroke-width="0.85" stroke-linejoin="miter"/><line x1="283.70" y1="152.00" x2="377.40" y2="152.00" stroke="#e2e4e6" stroke-width="0.7" /><line x1="283.70" y1="158.50" x2="283.70" y2="151.00" stroke="#e2e4e6" stroke-width="0.7" /><line x1="377.40" y1="158.50" x2="377.40" y2="151.00" stroke="#e2e4e6" stroke-width="0.7" /><line x1="281.79" y1="153.91" x2="285.61" y2="150.09" stroke="#f0f0f0" stroke-width="1.15" /><line x1="375.49" y1="153.91" x2="379.31" y2="150.09" stroke="#f0f0f0" stroke-width="1.15" /><line x1="372.20" y1="154.20" x2="415.70" y2="111.10" stroke="#e2e4e6" stroke-width="0.7" /><line x1="376.83" y1="158.74" x2="371.49" y2="153.50" stroke="#e2e4e6" stroke-width="0.7" /><line x1="420.33" y1="115.64" x2="414.99" y2="110.40" stroke="#e2e4e6" stroke-width="0.7" /><line x1="372.19" y1="156.90" x2="372.21" y2="151.50" stroke="#f0f0f0" stroke-width="1.15" /><line x1="415.69" y1="113.80" x2="415.71" y2="108.40" stroke="#f0f0f0" stroke-width="1.15" /><line x1="420.90" y1="109.60" x2="452.50" y2="109.60" stroke="#e2e4e6" stroke-width="0.7" /><line x1="420.90" y1="115.40" x2="420.90" y2="108.60" stroke="#e2e4e6" stroke-width="0.7" /><line x1="452.50" y1="115.40" x2="452.50" y2="108.60" stroke="#e2e4e6" stroke-width="0.7" /><line x1="418.99" y1="111.51" x2="422.81" y2="107.69" stroke="#f0f0f0" stroke-width="1.15" /><line x1="450.59" y1="111.51" x2="454.41" y2="107.69" stroke="#f0f0f0" stroke-width="1.15" /><line x1="457.50" y1="111.50" x2="522.80" y2="176.50" stroke="#e2e4e6" stroke-width="0.7" /><line x1="453.08" y1="115.65" x2="458.23" y2="110.82" stroke="#e2e4e6" stroke-width="0.7" /><line x1="518.38" y1="180.65" x2="523.53" y2="175.82" stroke="#e2e4e6" stroke-width="0.7" /><line x1="454.80" y1="111.51" x2="460.20" y2="111.49" stroke="#f0f0f0" stroke-width="1.15" /><line x1="520.10" y1="176.51" x2="525.50" y2="176.49" stroke="#f0f0f0" stroke-width="1.15" /><line x1="511.20" y1="119.60" x2="511.20" y2="181.20" stroke="#e2e4e6" stroke-width="0.7" /><line x1="517.00" y1="119.60" x2="510.20" y2="119.60" stroke="#e2e4e6" stroke-width="0.7" /><line x1="517.00" y1="181.20" x2="510.20" y2="181.20" stroke="#e2e4e6" stroke-width="0.7" /><line x1="509.29" y1="117.69" x2="513.11" y2="121.51" stroke="#f0f0f0" stroke-width="1.15" /><line x1="509.29" y1="179.29" x2="513.11" y2="183.11" stroke="#f0f0f0" stroke-width="1.15" /><line x1="517.80" y1="113.90" x2="549.30" y2="113.90" stroke="#e2e4e6" stroke-width="0.7" /><line x1="517.80" y1="118.80" x2="517.80" y2="112.90" stroke="#e2e4e6" stroke-width="0.7" /><line x1="549.30" y1="118.80" x2="549.30" y2="112.90" stroke="#e2e4e6" stroke-width="0.7" /><line x1="515.89" y1="115.81" x2="519.71" y2="111.99" stroke="#f0f0f0" stroke-width="1.15" /><line x1="547.39" y1="115.81" x2="551.21" y2="111.99" stroke="#f0f0f0" stroke-width="1.15" /><line x1="554.70" y1="116.30" x2="586.00" y2="169.20" stroke="#e2e4e6" stroke-width="0.7" /><line x1="549.98" y1="119.18" x2="555.55" y2="115.78" stroke="#e2e4e6" stroke-width="0.7" /><line x1="581.28" y1="172.08" x2="586.85" y2="168.68" stroke="#e2e4e6" stroke-width="0.7" /><line x1="552.08" y1="115.63" x2="557.32" y2="116.97" stroke="#f0f0f0" stroke-width="1.15" /><line x1="583.38" y1="168.53" x2="588.62" y2="169.87" stroke="#f0f0f0" stroke-width="1.15" /><line x1="599.40" y1="175.30" x2="599.40" y2="237.70" stroke="#e2e4e6" stroke-width="0.7" /><line x1="581.40" y1="175.30" x2="600.40" y2="175.30" stroke="#e2e4e6" stroke-width="0.7" /><line x1="581.40" y1="237.70" x2="600.40" y2="237.70" stroke="#e2e4e6" stroke-width="0.7" /><line x1="597.49" y1="173.39" x2="601.31" y2="177.21" stroke="#f0f0f0" stroke-width="1.15" /><line x1="597.49" y1="235.79" x2="601.31" y2="239.61" stroke="#f0f0f0" stroke-width="1.15" /><line x1="536.60" y1="282.40" x2="590.00" y2="250.90" stroke="#e2e4e6" stroke-width="0.7" /><line x1="527.61" y1="267.09" x2="537.11" y2="283.26" stroke="#e2e4e6" stroke-width="0.7" /><line x1="581.01" y1="235.59" x2="590.51" y2="251.76" stroke="#e2e4e6" stroke-width="0.7" /><line x1="535.93" y1="285.01" x2="537.27" y2="279.79" stroke="#f0f0f0" stroke-width="1.15" /><line x1="589.33" y1="253.51" x2="590.67" y2="248.29" stroke="#f0f0f0" stroke-width="1.15" /><line x1="434.40" y1="284.30" x2="527.20" y2="284.30" stroke="#e2e4e6" stroke-width="0.7" /><line x1="434.40" y1="267.20" x2="434.40" y2="285.30" stroke="#e2e4e6" stroke-width="0.7" /><line x1="527.20" y1="267.20" x2="527.20" y2="285.30" stroke="#e2e4e6" stroke-width="0.7" /><line x1="432.49" y1="286.21" x2="436.31" y2="282.39" stroke="#f0f0f0" stroke-width="1.15" /><line x1="525.29" y1="286.21" x2="529.11" y2="282.39" stroke="#f0f0f0" stroke-width="1.15" /><line x1="412.10" y1="306.70" x2="443.60" y2="275.40" stroke="#e2e4e6" stroke-width="0.7" /><line x1="403.47" y1="298.26" x2="412.81" y2="307.40" stroke="#e2e4e6" stroke-width="0.7" /><line x1="434.97" y1="266.96" x2="444.31" y2="276.10" stroke="#e2e4e6" stroke-width="0.7" /><line x1="412.09" y1="309.40" x2="412.11" y2="304.00" stroke="#f0f0f0" stroke-width="1.15" /><line x1="443.59" y1="278.10" x2="443.61" y2="272.70" stroke="#f0f0f0" stroke-width="1.15" /><line x1="295.70" y1="324.20" x2="404.50" y2="309.20" stroke="#e2e4e6" stroke-width="0.7" /><line x1="294.21" y1="313.49" x2="295.84" y2="325.19" stroke="#e2e4e6" stroke-width="0.7" /><line x1="403.01" y1="298.49" x2="404.64" y2="310.19" stroke="#e2e4e6" stroke-width="0.7" /><line x1="294.07" y1="326.35" x2="297.33" y2="322.05" stroke="#f0f0f0" stroke-width="1.15" /><line x1="402.87" y1="311.35" x2="406.13" y2="307.05" stroke="#f0f0f0" stroke-width="1.15" /><line x1="286.80" y1="311.10" x2="307.10" y2="211.70" stroke="#e2e4e6" stroke-width="0.7" /><line x1="293.32" y1="312.53" x2="285.82" y2="310.89" stroke="#e2e4e6" stroke-width="0.7" /><line x1="313.62" y1="213.13" x2="306.12" y2="211.49" stroke="#e2e4e6" stroke-width="0.7" /><line x1="288.29" y1="313.35" x2="285.31" y2="308.85" stroke="#f0f0f0" stroke-width="1.15" /><line x1="308.59" y1="213.95" x2="305.61" y2="209.45" stroke="#f0f0f0" stroke-width="1.15" /><line x1="278.70" y1="162.60" x2="309.40" y2="216.60" stroke="#e2e4e6" stroke-width="0.7" /><line x1="283.03" y1="159.74" x2="277.87" y2="163.15" stroke="#e2e4e6" stroke-width="0.7" /><line x1="313.73" y1="213.74" x2="308.57" y2="217.15" stroke="#e2e4e6" stroke-width="0.7" /><line x1="276.10" y1="161.88" x2="281.30" y2="163.32" stroke="#f0f0f0" stroke-width="1.15" /><line x1="306.80" y1="215.88" x2="312.00" y2="217.32" stroke="#f0f0f0" stroke-width="1.15" /><path d="M315.20 159.30A31.5 31.5 0 0 1 299.45 186.58" fill="none" stroke="#e2e4e6" stroke-width="0.75"/><line x1="316.90" y1="161.00" x2="313.50" y2="157.60" stroke="#f0f0f0" stroke-width="1.15" /><line x1="298.83" y1="188.90" x2="300.07" y2="184.26" stroke="#f0f0f0" stroke-width="1.15" /><path d="M488.46 151.86A41.5 41.5 0 0 1 517.80 139.70" fill="none" stroke="#e2e4e6" stroke-width="0.75"/><line x1="488.46" y1="149.46" x2="488.46" y2="154.26" stroke="#f0f0f0" stroke-width="1.15" /><line x1="519.50" y1="138.00" x2="516.10" y2="141.40" stroke="#f0f0f0" stroke-width="1.15" /><path d="M572.46 158.73A16 16 0 0 0 580.60 188.50" fill="none" stroke="#e2e4e6" stroke-width="0.75"/><line x1="573.05" y1="156.40" x2="571.86" y2="161.05" stroke="#f0f0f0" stroke-width="1.15" /><line x1="578.90" y1="190.20" x2="582.30" y2="186.80" stroke="#f0f0f0" stroke-width="1.15" /><path d="M510.20 266.40A17 17 0 0 1 541.85 257.77" fill="none" stroke="#e2e4e6" stroke-width="0.75"/><line x1="508.50" y1="264.70" x2="511.90" y2="268.10" stroke="#f0f0f0" stroke-width="1.15" /><line x1="544.17" y1="258.37" x2="539.52" y2="257.17" stroke="#f0f0f0" stroke-width="1.15" /><text x="330.30" y="149.30" transform="rotate(0 330.30 149.30)" font-size="5.2" fill="#ececec" text-anchor="middle" dominant-baseline="central" font-family="'Liberation Sans', sans-serif">6</text><text x="392.50" y="131.20" transform="rotate(-45 392.50 131.20)" font-size="5.2" fill="#ececec" text-anchor="middle" dominant-baseline="central" font-family="'Liberation Sans', sans-serif">4</text><text x="436.50" y="106.60" transform="rotate(0 436.50 106.60)" font-size="5.2" fill="#ececec" text-anchor="middle" dominant-baseline="central" font-family="'Liberation Sans', sans-serif">2</text><text x="490.60" y="142.60" transform="rotate(45 490.60 142.60)" font-size="5.2" fill="#ececec" text-anchor="middle" dominant-baseline="central" font-family="'Liberation Sans', sans-serif">6</text><text x="508.20" y="150.20" transform="rotate(-90 508.20 150.20)" font-size="5.2" fill="#ececec" text-anchor="middle" dominant-baseline="central" font-family="'Liberation Sans', sans-serif">4</text><text x="534.30" y="110.60" transform="rotate(0 534.30 110.60)" font-size="5.2" fill="#ececec" text-anchor="middle" dominant-baseline="central" font-family="'Liberation Sans', sans-serif">2</text><text x="573.30" y="141.80" transform="rotate(59 573.30 141.80)" font-size="5.2" fill="#ececec" text-anchor="middle" dominant-baseline="central" font-family="'Liberation Sans', sans-serif">4</text><text x="596.40" y="206.40" transform="rotate(-90 596.40 206.40)" font-size="5.2" fill="#ececec" text-anchor="middle" dominant-baseline="central" font-family="'Liberation Sans', sans-serif">4</text><text x="562.20" y="264.40" transform="rotate(-30 562.20 264.40)" font-size="5.2" fill="#ececec" text-anchor="middle" dominant-baseline="central" font-family="'Liberation Sans', sans-serif">4</text><text x="481.30" y="281.60" transform="rotate(0 481.30 281.60)" font-size="5.2" fill="#ececec" text-anchor="middle" dominant-baseline="central" font-family="'Liberation Sans', sans-serif">6</text><text x="425.20" y="288.20" transform="rotate(-45 425.20 288.20)" font-size="5.2" fill="#ececec" text-anchor="middle" dominant-baseline="central" font-family="'Liberation Sans', sans-serif">2.83</text><text x="350.40" y="312.60" transform="rotate(-8 350.40 312.60)" font-size="5.2" fill="#ececec" text-anchor="middle" dominant-baseline="central" font-family="'Liberation Sans', sans-serif">7.07</text><text x="293.20" y="260.80" transform="rotate(-78 293.20 260.80)" font-size="5.2" fill="#ececec" text-anchor="middle" dominant-baseline="central" font-family="'Liberation Sans', sans-serif">6.84</text><text x="308.80" y="174.20" transform="rotate(-60 308.80 174.20)" font-size="4.8" fill="#ececec" text-anchor="middle" dominant-baseline="central" font-family="'Liberation Sans', sans-serif">60°</text><text x="501.60" y="140.40" transform="rotate(-22 501.60 140.40)" font-size="4.8" fill="#ececec" text-anchor="middle" dominant-baseline="central" font-family="'Liberation Sans', sans-serif">45°</text><text x="568.60" y="175.60" transform="rotate(80 568.60 175.60)" font-size="4.8" fill="#ececec" text-anchor="middle" dominant-baseline="central" font-family="'Liberation Sans', sans-serif">150°</text><text x="522.20" y="246.60" transform="rotate(14 522.20 246.60)" font-size="4.8" fill="#ececec" text-anchor="middle" dominant-baseline="central" font-family="'Liberation Sans', sans-serif">150°</text><rect x="563.00" y="205.00" width="0.9" height="0.9" fill="#8a9098"/><rect x="527.40" y="232.00" width="0.9" height="0.9" fill="#8a9098"/><rect x="509.40" y="236.00" width="0.9" height="0.9" fill="#8a9098"/><rect x="569.00" y="236.60" width="0.9" height="0.9" fill="#8a9098"/><rect x="434.20" y="231.80" width="0.9" height="0.9" fill="#8a9098"/><line x1="942.90" y1="-0.50" x2="907.10" y2="38.70" stroke="#e2e4e6" stroke-width="0.8" /><line x1="895.00" y1="28.00" x2="907.10" y2="38.70" stroke="#e2e4e6" stroke-width="0.8" /><line x1="907.10" y1="35.80" x2="907.10" y2="41.60" stroke="#f4f4f4" stroke-width="1.1" /><line x1="9.60" y1="363.30" x2="9.60" y2="389.70" stroke="#d8d8d8" stroke-width="0.8" /><line x1="9.60" y1="389.70" x2="36.80" y2="389.70" stroke="#d8d8d8" stroke-width="0.8" /><rect x="7.0" y="387.10" width="5.4" height="5.4" fill="none" stroke="#d8d8d8" stroke-width="0.7"/><line x1="10.60" y1="353.70" x2="14.00" y2="357.60" stroke="#d8d8d8" stroke-width="0.8" /><line x1="17.40" y1="353.70" x2="14.00" y2="357.60" stroke="#d8d8d8" stroke-width="0.8" /><line x1="14.00" y1="357.60" x2="14.00" y2="361.40" stroke="#d8d8d8" stroke-width="0.8" /><line x1="39.40" y1="382.40" x2="46.20" y2="389.20" stroke="#d8d8d8" stroke-width="0.8" /><line x1="46.20" y1="382.40" x2="39.40" y2="389.20" stroke="#d8d8d8" stroke-width="0.8" /><line x1="209.60" y1="371.00" x2="209.60" y2="396.00" stroke="#e0e0e0" stroke-width="0.7" /><line x1="183.80" y1="397.40" x2="235.80" y2="397.40" stroke="#dcdcdc" stroke-width="0.6" /><rect x="208.1" y="396.10" width="3" height="3" fill="#212830" stroke="#f0f0f0" stroke-width="0.8"/></svg>
<span class="t" style="left:297.00px;top:332.18px;font-size:6.6px;transform:scaleX(0.9948);color:#e8e8e8;">Empezar desde este punto</span>
<span class="t" style="left:1.60px;top:4.48px;font-size:7.0px;transform:scaleX(0.9510);color:#dcdfe2;">[–][Top][2D Wireframe]</span>
<svg class="b" style="left:986.00px;top:4.00px" width="30" height="9" viewBox="0 0 30 9"><path d="M1.200 5.400h5.400" stroke="#f0f0f0" stroke-width="1.300"/><path d="M12.400 3.600h3.800v3.800h-3.800z" fill="none" stroke="#f0f0f0" stroke-width="1.100"/><path d="M13.600 3.200v-1h3.800v3.800h-1" fill="none" stroke="#d0d0d0" stroke-width=".7"/><path d="M22.400 2.400l4.600 4.600M27 2.400l-4.600 4.600" stroke="#f0f0f0" stroke-width="1.200"/></svg>
<svg class="b" style="left:935.50px;top:16.40px" width="80" height="80" viewBox="0 0 80 80"><circle cx="40" cy="40" r="29.100" fill="none" stroke="#4b525b" stroke-width="6.200"/><rect x="26.700" y="26.700" width="26.800" height="26.800" fill="#b4b6b8"/><rect x="31.200" y="31.200" width="17.600" height="17.600" fill="#a8aaac"/></svg>
<span class="t" style="left:971.80px;top:21.92px;font-size:10.8px;transform:scaleX(0.9728);color:#cfcfcf;font-weight:700;">N</span>
<span class="t" style="left:971.90px;top:81.92px;font-size:10.8px;transform:scaleX(0.9857);color:#cfcfcf;font-weight:700;">S</span>
<span class="t" style="left:940.00px;top:51.92px;font-size:10.8px;transform:scaleX(1.0585);color:#cfcfcf;font-weight:700;">W</span>
<span class="t" style="left:1001.80px;top:51.92px;font-size:10.8px;transform:scaleX(0.9857);color:#cfcfcf;font-weight:700;">E</span>
<span class="t" style="left:970.00px;top:53.68px;font-size:6.6px;transform:scaleX(0.8335);color:#3c4046;">TOP</span>
<div class="b " style="left:962.90px;top:103.10px;width:25.30px;height:9.60px;background:#82868c;border-radius:2px;border:0.5px solid #9a9ea4;"></div>
<span class="t" style="left:965.60px;top:105.36px;font-size:5.4px;transform:scaleX(0.9540);color:#3e444c;">WCS</span>
<svg class="b" style="left:980.60px;top:106.60px" width="4" height="3" viewBox="0 0 4 3"><path d="M.4.4h2.600L1.700 2.200z" fill="#5a6068"/></svg>
<div class="b " style="left:1000.40px;top:125.40px;width:17.40px;height:113.80px;background:#575d64;border-radius:2.5px;border:0.5px solid #646a71;"></div>
<svg class="b" style="left:1000.40px;top:125.40px" width="18" height="114" viewBox="0 0 18 114"><path d="M4 12.600c0-2 1.400-3.400 3.400-3.400h5.400v5.400c0 2-1.400 3.400-3.400 3.400h-2c-2 0-3.400-1.400-3.400-3.400z" fill="none" stroke="#767c83" stroke-width="1"/><circle cx="8.400" cy="13.600" r="2.600" fill="none" stroke="#767c83" stroke-width=".8"/><path d="M5.200 40v-4.600M7.300 39v-6M9.400 39v-6M11.500 40v-4.600M4.400 40c-1-1-1.800-.4-1 .8 1.200 2 2.600 3.600 5 3.600s4-1.400 4-4.400" fill="none" stroke="#767c83" stroke-width="1"/><path d="M3.200 49.600l7 7M10.600 49.600L3.400 56.800" stroke="#767c83" stroke-width=".9"/><circle cx="11.600" cy="57.400" r="1.900" fill="none" stroke="#767c83" stroke-width=".8"/><ellipse cx="8.600" cy="75.600" rx="5.600" ry="2.400" fill="none" stroke="#767c83" stroke-width=".9"/><ellipse cx="8.600" cy="75.600" rx="2.200" ry="5.800" fill="none" stroke="#767c83" stroke-width=".9"/><rect x="3.600" y="96" width="9.800" height="7" fill="none" stroke="#767c83" stroke-width=".8"/><path d="M7 97.600v3.800l3.200-1.900z" fill="#767c83"/><path d="M3.600 93.200h2.600v1.600h-2.600zM7.200 93.200h2.600v1.600h-2.600zM10.800 93.200h2.600v1.600h-2.600z" fill="none" stroke="#767c83" stroke-width=".5"/><circle cx="8.600" cy="27.700" r=".5" fill="#767c83"/><circle cx="8.600" cy="64.900" r=".5" fill="#767c83"/><circle cx="8.600" cy="85.300" r=".5" fill="#767c83"/><circle cx="13.900" cy="4" r="1" fill="none" stroke="#767c83" stroke-width=".5"/><circle cx="13.900" cy="110.200" r="1" fill="none" stroke="#767c83" stroke-width=".5"/></svg>
<div class="b " style="left:1019.80px;top:0.00px;width:3.10px;height:400.00px;background:#b9d3ee;"></div>
<div class="b " style="left:1022.80px;top:0.00px;width:1.20px;height:400.00px;background:#0f5a70;"></div>
</div>
<div class="sec" id="cmd" style="top:492px;height:47px">
<div class="b " style="left:0.00px;top:0.00px;width:1024.00px;height:1.00px;background:#686a6c;"></div>
<div class="b " style="left:0.00px;top:1.00px;width:1024.00px;height:1.00px;background:#bdbdbd;"></div>
<div class="b " style="left:0.00px;top:1.00px;width:11.80px;height:46.00px;background:linear-gradient(#8c8c8c,#6a6a6a 40%,#4a4a4a);"></div>
<svg class="b" style="left:1.40px;top:2.40px" width="9" height="4" viewBox="0 0 9 4"><path d="M.4.6h8M.4 2h8" stroke="#8c8c8c" stroke-width=".7" stroke-dasharray=".8 .6"/></svg>
<svg class="b" style="left:3.00px;top:9.60px" width="6" height="6" viewBox="0 0 6 6"><path d="M.8.8l4 4M4.800.8l-4 4" stroke="#f0f0f0" stroke-width=".9"/></svg>
<svg class="b" style="left:2.40px;top:20.00px" width="8" height="8" viewBox="0 0 8 8"><path d="M1.400 1.200c1.400-.8 2.800.2 2.600 1.700L7 6l-1 1-3-3C1.500 4.300.5 3 1 1.800l1.300 1.200.9-.9z" fill="#f0f0f0"/></svg>
<span class="t" style="left:13.30px;top:3.28px;font-size:7.0px;transform:scaleX(0.8914);color:#0c0c0c;font-family:'Liberation Mono', monospace;">Command:</span>
<span class="t" style="left:13.30px;top:11.23px;font-size:7.0px;transform:scaleX(0.8914);color:#0c0c0c;font-family:'Liberation Mono', monospace;">Command:</span>
<span class="t" style="left:13.30px;top:19.18px;font-size:7.0px;transform:scaleX(0.8914);color:#0c0c0c;font-family:'Liberation Mono', monospace;">Command:</span>
<span class="t" style="left:13.30px;top:27.13px;font-size:7.0px;transform:scaleX(0.8914);color:#0c0c0c;font-family:'Liberation Mono', monospace;">Command: _mtedit</span>
<div class="b " style="left:11.80px;top:34.30px;width:1012.20px;height:12.50px;background:#ffffff;border-top:0.6px solid #8a8a8a;"></div>
<svg class="b" style="left:14.60px;top:36.60px" width="9" height="8" viewBox="0 0 9 8"><rect x=".4" y=".4" width="7.600" height="6.800" rx=".8" fill="#e6e6e6" stroke="#9a9a9a" stroke-width=".5"/><path d="M1.800 2.200l1.800 1.600-1.800 1.600M4.400 5.600h2.400" fill="none" stroke="#555" stroke-width=".6"/></svg>
<svg class="b" style="left:24.80px;top:39.80px" width="4" height="3" viewBox="0 0 4 3"><path d="M.3.3h2.600L1.600 2z" fill="#8a8a8a"/></svg>
<div class="b " style="left:30.20px;top:36.20px;width:0.70px;height:8.40px;background:#2a2a2a;"></div>
</div>
<div class="sec" id="layoutbar" style="top:539px;height:16px">
<svg class="b" style="left:6.40px;top:-0.20px" width="29.4" height="10.0" viewBox="0 0 29.4 10.0"><path d="M0 -1C2.25 -1 2.25 10.0 5.5 10.0H23.9C27.15 10.0 27.15 -1 29.4 -1z" fill="#787878" stroke="#8c8c8c" stroke-width=".6"/></svg>
<svg class="b" style="left:38.20px;top:-0.20px" width="33.2" height="9.800000000000068" viewBox="0 0 33.2 9.800000000000068"><path d="M0 -1C2.25 -1 2.25 9.800000000000068 5.5 9.800000000000068H27.700000000000003C30.950000000000003 9.800000000000068 30.950000000000003 -1 33.2 -1z" fill="#505050" stroke="#6c6c6c" stroke-width=".6"/></svg>
<svg class="b" style="left:72.30px;top:-0.20px" width="34.10000000000001" height="9.800000000000068" viewBox="0 0 34.10000000000001 9.800000000000068"><path d="M0 -1C2.25 -1 2.25 9.800000000000068 5.5 9.800000000000068H28.60000000000001C31.85000000000001 9.800000000000068 31.85000000000001 -1 34.10000000000001 -1z" fill="#505050" stroke="#6c6c6c" stroke-width=".6"/></svg>
<svg class="b" style="left:108.80px;top:-0.20px" width="11.799999999999997" height="9.0" viewBox="0 0 11.799999999999997 9.0"><path d="M0 -1C1.5 -1 1.5 9.0 4 9.0H7.799999999999997C10.299999999999997 9.0 10.299999999999997 -1 11.799999999999997 -1z" fill="#505050" stroke="#6c6c6c" stroke-width=".6"/></svg>
<span class="t" style="left:12.70px;top:1.82px;font-size:6.5px;transform:scaleX(0.9744);color:#ffffff;font-weight:700;">Model</span>
<span class="t" style="left:43.00px;top:1.87px;font-size:6.4px;transform:scaleX(0.9846);color:#c4c4c4;">Layout1</span>
<span class="t" style="left:77.60px;top:1.87px;font-size:6.4px;transform:scaleX(0.9846);color:#c4c4c4;">Layout2</span>
<svg class="b" style="left:112.00px;top:2.20px" width="6" height="6" viewBox="0 0 6 6"><path d="M2.700 .4v4.600M.4 2.700h4.600" stroke="#d8d8d8" stroke-width=".9"/></svg>
<div class="b " style="left:199.30px;top:5.60px;width:45.80px;height:8.80px;background:#444444;"></div>
<span class="t" style="left:203.50px;top:7.17px;font-size:6.0px;transform:scaleX(0.9293);color:#545454;">Vista de tareas</span>
<div class="b " style="left:722.00px;top:0.90px;width:302.00px;height:13.90px;background:#535353;border-top:0.5px solid #666;border-left:0.5px solid #666;"></div>
<div class="b " style="left:748.20px;top:1.20px;width:0.70px;height:12.80px;background:#3f3f3f;"></div>
<div class="b " style="left:783.70px;top:1.20px;width:0.70px;height:12.80px;background:#3f3f3f;"></div>
<div class="b " style="left:838.70px;top:1.20px;width:0.70px;height:12.80px;background:#3f3f3f;"></div>
<div class="b " style="left:874.30px;top:1.20px;width:0.70px;height:12.80px;background:#3f3f3f;"></div>
<div class="b " style="left:931.70px;top:1.20px;width:0.70px;height:12.80px;background:#3f3f3f;"></div>
<div class="b " style="left:953.50px;top:1.20px;width:0.70px;height:12.80px;background:#3f3f3f;"></div>
<div class="b " style="left:967.70px;top:1.20px;width:0.70px;height:12.80px;background:#3f3f3f;"></div>
<div class="b " style="left:981.20px;top:1.20px;width:0.70px;height:12.80px;background:#3f3f3f;"></div>
<div class="b " style="left:996.20px;top:1.20px;width:0.70px;height:12.80px;background:#3f3f3f;"></div>
<span class="t" style="left:725.20px;top:4.47px;font-size:6.2px;transform:scaleX(0.9488);color:#f4f4f4;font-weight:700;">MODEL</span>
<svg class="b" style="left:752.00px;top:3.40px" width="9" height="9" viewBox="0 0 9 9"><path d="M.4 2h7.600M.4 4.200h7.600M.4 6.400h7.600M1.600.4v7.600M3.800.4v7.600M6 .4v7.600M.4.4h7.600v7.600h-7.600z" fill="none" stroke="#2f7fe6" stroke-width=".7"/></svg>
<svg class="b" style="left:764.60px;top:3.40px" width="9" height="9" viewBox="0 0 9 9"><path d="M.8 1h7.600M.8 3.400h7.600M.8 5.800h7.600M.8 8.200h7.600" stroke="#8a8a8a" stroke-width=".9" stroke-dasharray=".9 1.500"/></svg>
<svg class="b" style="left:777.90px;top:6.60px" width="3.2" height="2" viewBox="0 0 3.2 2"><path d="M0 0h3.200L1.600 2z" fill="#e8e8e8"/></svg>
<svg class="b" style="left:788.20px;top:3.60px" width="8" height="8" viewBox="0 0 8 8"><path d="M1 .6v6.400h6" fill="none" stroke="#d0d0d0" stroke-width=".9"/><path d="M1 4.600h2.400v2.400" fill="none" stroke="#b0b0b0" stroke-width=".6"/></svg>
<svg class="b" style="left:799.40px;top:3.20px" width="10" height="9" viewBox="0 0 10 9"><circle cx="4.400" cy="4.600" r="3.600" fill="none" stroke="#c8c8c8" stroke-width=".8"/><path d="M4.400 4.600h4.400" stroke="#c8c8c8" stroke-width=".8"/></svg>
<svg class="b" style="left:813.00px;top:6.60px" width="3.2" height="2" viewBox="0 0 3.2 2"><path d="M0 0h3.200L1.600 2z" fill="#e8e8e8"/></svg>
<svg class="b" style="left:821.00px;top:2.80px" width="10" height="10" viewBox="0 0 10 10"><path d="M.6.600L8.800 9.200M4.400.4L5.800 9.400" stroke="#b4b4b4" stroke-width=".8"/></svg>
<svg class="b" style="left:834.00px;top:6.60px" width="3.2" height="2" viewBox="0 0 3.2 2"><path d="M0 0h3.200L1.600 2z" fill="#e8e8e8"/></svg>
<svg class="b" style="left:842.00px;top:3.60px" width="10" height="8" viewBox="0 0 10 8"><path d="M.6 7.200L8.400.8M.6 7.200h8.400" stroke="#c0c0c0" stroke-width=".8" fill="none"/></svg>
<svg class="b" style="left:855.00px;top:2.60px" width="10" height="10" viewBox="0 0 10 10"><rect x="1.200" y="1.800" width="7" height="7" rx="1" fill="none" stroke="#2f7fe6" stroke-width="1.100"/><rect x=".2" y=".6" width="2.200" height="2.200" fill="#2fa84a"/></svg>
<svg class="b" style="left:868.40px;top:6.60px" width="3.2" height="2" viewBox="0 0 3.2 2"><path d="M0 0h3.200L1.600 2z" fill="#e8e8e8"/></svg>
<svg class="b" style="left:876.60px;top:2.60px" width="11" height="10" viewBox="0 0 11 10"><path d="M5 5.400L1 9.200M5 5.400l4.400 3.800M5 5.400L4.200.8" stroke="#2f7fe6" stroke-width="1.500" fill="none"/><path d="M5.400 3.400l3.400-2.600" stroke="#2f7fe6" stroke-width=".8"/><circle cx="8.400" cy="1.800" r="1.300" fill="none" stroke="#2f7fe6" stroke-width=".7"/></svg>
<svg class="b" style="left:890.20px;top:2.60px" width="10" height="10" viewBox="0 0 10 10"><path d="M4.600 5.400L.8 9.200M4.600 5.400l4 3.800M4.600 5.400L4.400.8" stroke="#cfcfcf" stroke-width="1.400" fill="none"/><path d="M5.800 3l2.400-2.400M7 3.400l2-.6" stroke="#cfcfcf" stroke-width=".6"/></svg>
<svg class="b" style="left:902.60px;top:2.60px" width="10" height="10" viewBox="0 0 10 10"><path d="M4.400 5.400L.8 9.200M4.400 5.400l4 3.800M4.400 5.400V.6" stroke="#cfcfcf" stroke-width="1.400" fill="none"/></svg>
<span class="t" style="left:916.00px;top:4.28px;font-size:6.6px;transform:scaleX(0.7632);color:#f0f0f0;">1:1</span>
<svg class="b" style="left:925.60px;top:6.60px" width="3.2" height="2" viewBox="0 0 3.2 2"><path d="M0 0h3.200L1.600 2z" fill="#e8e8e8"/></svg>
<svg class="b" style="left:935.80px;top:3.40px" width="9" height="9" viewBox="0 0 9 9"><path d="M6.20 4.40L8.10 4.40M5.67 5.67L7.02 7.02M4.40 6.20L4.40 8.10M3.13 5.67L1.78 7.02M2.60 4.40L0.70 4.40M3.13 3.13L1.78 1.78M4.40 2.60L4.40 0.70M5.67 3.13L7.02 1.78" stroke="#d4d4d4" stroke-width="1.300"/><circle cx="4.400" cy="4.400" r="2.600" fill="#d4d4d4"/><circle cx="4.400" cy="4.400" r="1" fill="#535353"/></svg>
<svg class="b" style="left:948.00px;top:6.60px" width="3.2" height="2" viewBox="0 0 3.2 2"><path d="M0 0h3.200L1.600 2z" fill="#e8e8e8"/></svg>
<svg class="b" style="left:956.80px;top:3.20px" width="9" height="9" viewBox="0 0 9 9"><path d="M4.300 .4v8M.3 4.400h8" stroke="#f0f0f0" stroke-width="1"/></svg>
<svg class="b" style="left:970.00px;top:2.80px" width="11" height="10" viewBox="0 0 11 10"><rect x=".6" y=".8" width="4" height="3" fill="none" stroke="#c8c8c8" stroke-width=".7"/><rect x="5.200" y="3.400" width="4" height="3" fill="none" stroke="#c8c8c8" stroke-width=".7"/><circle cx="3" cy="7.600" r="1.500" fill="none" stroke="#c8c8c8" stroke-width=".7"/><path d="M4.600 2.400h2.600v1M4.400 7.600h2.800v-1.200" fill="none" stroke="#c8c8c8" stroke-width=".5"/></svg>
<svg class="b" style="left:984.80px;top:2.60px" width="10" height="10" viewBox="0 0 10 10"><circle cx="4.800" cy="5" r="4.400" fill="#1f6fd8" stroke="#4a90ea" stroke-width=".5"/><path d="M3 7l4-4" stroke="#0c3f88" stroke-width=".8"/></svg>
<svg class="b" style="left:999.00px;top:3.40px" width="10" height="8" viewBox="0 0 10 8"><rect x=".4" y=".4" width="8.800" height="7" fill="#e0e0e0"/><rect x="1.200" y="1.200" width="3.400" height="2.600" fill="#535353"/><path d="M5.600 5.800l2.600-3.200v3.200z" fill="#535353"/><path d="M1.200 6.400l2-2 1.400 2z" fill="#535353"/></svg>
<svg class="b" style="left:1012.20px;top:3.60px" width="10" height="8" viewBox="0 0 10 8"><path d="M.2 1.200h8.600M.2 3.800h8.600M.2 6.400h8.600" stroke="#e8e8e8" stroke-width="1.100"/></svg>
</div>
<div class="sec" id="taskbar" style="top:555px;height:21px">
<svg class="b" style="left:8.30px;top:5.90px" width="9.2" height="9.2" viewBox="0 0 7.7 7.95"><path d="M0 1.100L3.300.65V3.700H0zM3.800.580L7.700 0v3.700H3.800zM0 4.200h3.300v3.100L0 6.850zM3.800 4.200h3.900v3.750L3.800 7.400z" fill="#ffffff"/></svg>
<div class="b " style="left:26.00px;top:0.20px;width:182.80px;height:20.80px;background:#f3f3f3;"></div>
<svg class="b" style="left:30.10px;top:4.60px" width="12" height="12" viewBox="0 0 12 12"><circle cx="6" cy="6" r="4.800" fill="none" stroke="#161616" stroke-width="1.300"/></svg>
<span class="t" style="left:47.30px;top:6.50px;font-size:8.4px;transform:scaleX(0.9193);color:#2b2b2b;">Escribe aquí para buscar</span>
<svg class="b" style="left:195.60px;top:5.20px" width="6" height="10" viewBox="0 0 6 10"><rect x="1.500" y=".5" width="2.600" height="5.400" rx="1.300" fill="none" stroke="#3a3a3a" stroke-width=".7"/><path d="M.5 4.400c0 3.200 4.600 3.200 4.600 0M2.800 6.800v1.600" fill="none" stroke="#3a3a3a" stroke-width=".6"/></svg>
<div class="b " style="left:208.90px;top:-0.40px;width:26.00px;height:21.40px;background:#22323c;"></div>
<svg class="b" style="left:217.40px;top:5.60px" width="11" height="9" viewBox="0 0 11 9"><rect x=".5" y=".9" width="6.400" height="2.600" fill="none" stroke="#f0f0f0" stroke-width=".8"/><rect x=".5" y="5.300" width="6.400" height="2.600" fill="none" stroke="#f0f0f0" stroke-width=".8"/><path d="M9 .6v5.600M9 7.400v1" stroke="#f0f0f0" stroke-width=".9"/></svg>
<svg class="b" style="left:243.40px;top:3.60px" width="14" height="14" viewBox="0 0 14 14"><circle cx="6.600" cy="6.600" r="6.400" fill="#fff"/><path d="M6.600 6.600L1.060 3.400A6.400 6.400 0 0 1 12.140 3.400z" fill="#e3402f"/><path d="M6.600 6.600L12.140 3.400A6.400 6.400 0 0 1 6.600 13z" fill="#f8c51c"/><path d="M6.600 6.600L6.600 13A6.400 6.400 0 0 1 1.060 3.400z" fill="#2ca24c"/><circle cx="6.600" cy="6.600" r="3" fill="#fff"/><circle cx="6.600" cy="6.600" r="2.300" fill="#3b7ded"/></svg>
<div class="b " style="left:238.00px;top:19.90px;width:21.80px;height:1.10px;background:#76b9ed;"></div>
<svg class="b" style="left:268.60px;top:4.40px" width="13" height="12" viewBox="0 0 13 12"><path d="M.6 1.400h4l1 1.200h6.600v7.800H.6z" fill="#f5c542"/><path d="M.6 4h11.600v6.400H.6z" fill="#fadb7a"/><rect x="3" y="6.400" width="6.600" height="4" fill="#58a8e8"/></svg>
<div class="b " style="left:288.90px;top:-0.40px;width:25.00px;height:21.40px;background:#3e4a54;"></div>
<div class="b " style="left:295.00px;top:3.80px;width:12.60px;height:12.80px;background:#f2eeee;"></div>
<span class="t" style="left:296.60px;top:4.24px;font-size:12.6px;transform:scaleX(1.0319);color:#c8202c;font-weight:700;">A</span>
<div class="b " style="left:288.90px;top:19.90px;width:25.00px;height:1.10px;background:#76b9ed;"></div>
<svg class="b" style="left:884.00px;top:5.20px" width="10" height="10" viewBox="0 0 10 10"><circle cx="3" cy="3.600" r="1.400" fill="none" stroke="#f0f0f0" stroke-width=".7"/><path d="M.6 9c0-2.200 1-3.200 2.400-3.200S5.400 6.800 5.400 9" fill="none" stroke="#f0f0f0" stroke-width=".7"/><circle cx="7.200" cy="1.800" r="1.100" fill="none" stroke="#f0f0f0" stroke-width=".6"/><path d="M5.800 5c0-1.300.6-1.900 1.400-1.900s1.400.6 1.400 1.900" fill="none" stroke="#f0f0f0" stroke-width=".6"/></svg>
<svg class="b" style="left:903.60px;top:7.60px" width="8" height="5" viewBox="0 0 8 5"><path d="M.6 4.200L3.900.9l3.300 3.300" fill="none" stroke="#f0f0f0" stroke-width=".8"/></svg>
<svg class="b" style="left:915.20px;top:5.80px" width="11" height="9" viewBox="0 0 11 9"><rect x="1.800" y=".6" width="8" height="5.400" fill="none" stroke="#f0f0f0" stroke-width=".7"/><rect x=".4" y="2.600" width="3" height="4.600" fill="#13171b" stroke="#f0f0f0" stroke-width=".6"/><path d="M4.400 7.600h4.400" stroke="#f0f0f0" stroke-width=".7"/></svg>
<svg class="b" style="left:927.60px;top:6.20px" width="10" height="8" viewBox="0 0 10 8"><path d="M.5 2.800h1.600L4.300.8v6.400L2.100 5.200H.5z" fill="none" stroke="#f0f0f0" stroke-width=".7"/><path d="M5.800 2.600l2.800 2.800M8.600 2.600L5.800 5.400" stroke="#f0f0f0" stroke-width=".7"/></svg>
<span class="t" style="left:943.70px;top:7.97px;font-size:6.4px;transform:scaleX(0.7580);color:#f0f0f0;">ESP</span>
<span class="t" style="left:962.40px;top:3.08px;font-size:6.6px;transform:scaleX(0.9108);color:#f0f0f0;">11:47 a. m.</span>
<span class="t" style="left:962.40px;top:12.38px;font-size:6.6px;transform:scaleX(0.9087);color:#f0f0f0;">19/02/2020</span>
<svg class="b" style="left:1002.00px;top:4.40px" width="13" height="13" viewBox="0 0 13 13"><path d="M.6.600h8.800v6.600H4L2.200 9V7.200H.6z" fill="#f4f4f4"/><path d="M2 2.400h6M2 3.900h6M2 5.400h6" stroke="#13171b" stroke-width=".5"/><circle cx="8.200" cy="9.400" r="3" fill="#13171b" stroke="#f0f0f0" stroke-width=".6"/></svg>
<span class="t" style="left:1008.80px;top:11.56px;font-size:4.8px;transform:scaleX(1.0480);color:#ffffff;font-weight:700;">2</span>
<div class="b " style="left:1020.80px;top:0.00px;width:0.60px;height:21.00px;background:#5a5e62;"></div>
</div>
<div class="sec" id="overlay" style="top:0px;height:0px">
<div class="b " style="left:0.00px;top:0.00px;width:21.80px;height:21.60px;background:#3a3a3a;"></div>
<div class="b " style="left:0.90px;top:1.00px;width:20.30px;height:20.00px;background:linear-gradient(#c4c4c4,#8e8e8e);border-top:0.5px solid #d4d4d4;border-left:0.5px solid #b8b8b8;"></div>
<span class="t" style="left:2.60px;top:-0.27px;font-size:19.6px;transform:scaleX(0.9042);color:#cc1a22;font-weight:700;">A</span>
<svg class="b" style="left:16.40px;top:9.30px" width="4" height="3" viewBox="0 0 4 3"><path d="M.2.2h3.400L1.900 2.400z" fill="#36424e"/></svg>
</div>
</body></html>
